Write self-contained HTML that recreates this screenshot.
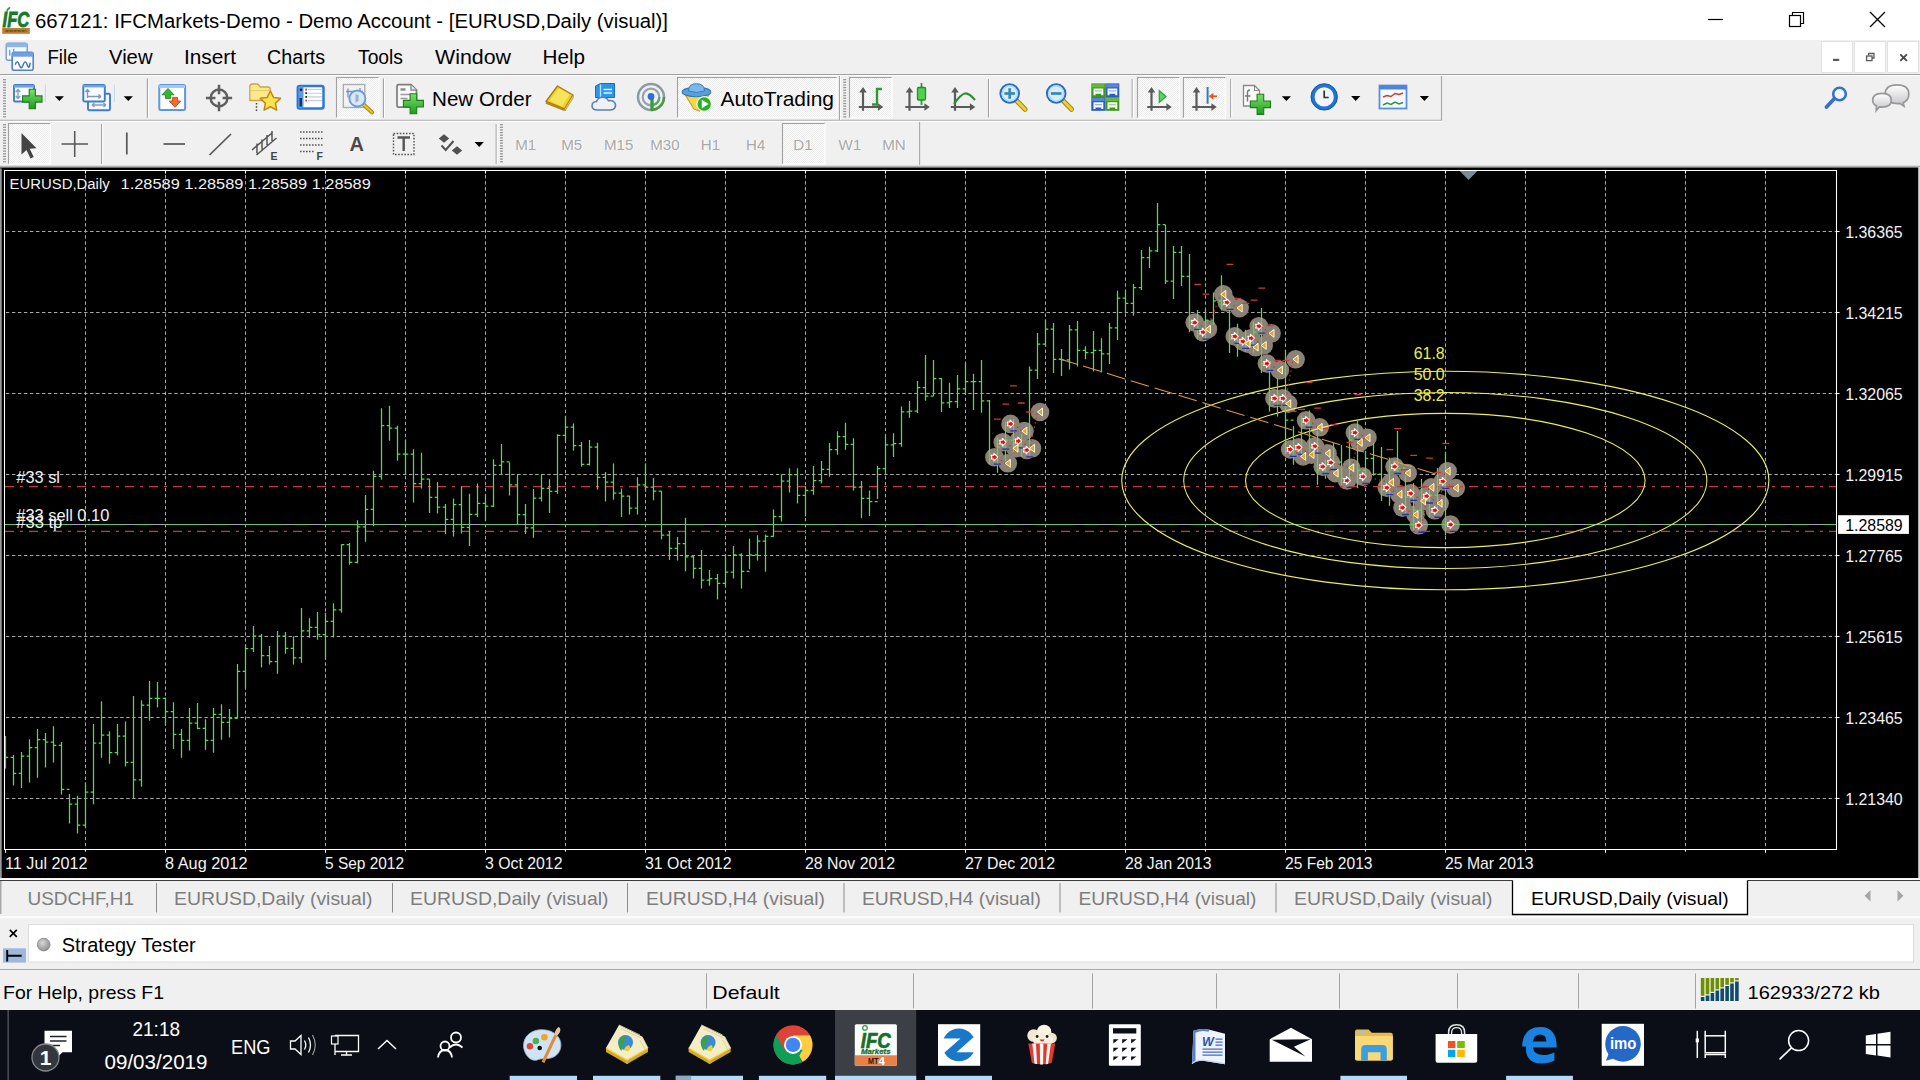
<!DOCTYPE html>
<html><head><meta charset="utf-8"><title>667121: IFCMarkets-Demo - Demo Account - [EURUSD,Daily (visual)]</title>
<style>html,body{margin:0;padding:0;background:#f0f0f0;overflow:hidden;width:1920px;height:1080px}svg{display:block;font-family:"Liberation Sans",sans-serif}text{font-family:"Liberation Sans",sans-serif;white-space:pre}</style></head><body>
<svg width="1920" height="1080" viewBox="0 0 1920 1080">
<defs><pattern id="dith" width="2" height="2" patternUnits="userSpaceOnUse"><rect width="2" height="2" fill="#ffffff"/><rect width="1" height="1" fill="#ececec"/><rect x="1" y="1" width="1" height="1" fill="#ececec"/></pattern><radialGradient id="gball" cx="0.4" cy="0.35" r="0.7"><stop offset="0" stop-color="#d8d8d8"/><stop offset="1" stop-color="#8c8c8c"/></radialGradient><linearGradient id="ggreen" x1="0" y1="0" x2="0" y2="1"><stop offset="0" stop-color="#7be06a"/><stop offset="1" stop-color="#1f9a1f"/></linearGradient><linearGradient id="gblue" x1="0" y1="0" x2="0" y2="1"><stop offset="0" stop-color="#9cc4f0"/><stop offset="1" stop-color="#3b78c8"/></linearGradient><linearGradient id="ggold" x1="0" y1="0" x2="1" y2="1"><stop offset="0" stop-color="#ffe680"/><stop offset="1" stop-color="#d79a1a"/></linearGradient><linearGradient id="gglass" x1="0" y1="0" x2="1" y2="1"><stop offset="0" stop-color="#e8f3ff"/><stop offset="1" stop-color="#8fbcec"/></linearGradient></defs>
<rect x="0" y="0" width="1920" height="1080" fill="#f0f0f0" />
<rect x="0" y="0" width="1920" height="40" fill="#ffffff" />
<g><rect x="2.2" y="6.5" width="27.600" height="22" fill="#fbfdfb"/><rect x="2.2" y="28" width="27.600" height="5.800" fill="#d4722e"/><path d="M5.500 30.900h21" stroke="#3f6a1e" stroke-width="1.700" stroke-dasharray="3.200 .8"/><path d="M6 11.500q1.500-4.500 4.500-4.800l-.8 2.300q-1.600.6-2.300 2.700z" fill="#239a3a"/><text x="2.600" y="27.300" font-size="22.500" font-weight="bold" font-style="italic" fill="#157a2c" stroke="#157a2c" stroke-width=".9" textLength="26.500" lengthAdjust="spacingAndGlyphs">IFC</text></g>
<text x="35" y="28.2" font-size="19.6" fill="#000" textLength="633" lengthAdjust="spacingAndGlyphs" >667121: IFCMarkets-Demo - Demo Account - [EURUSD,Daily (visual)]</text>
<line x1="1708" y1="19.5" x2="1723" y2="19.5" stroke="#000" stroke-width="1.2" />
<path d="M1792.5 15.5v-3h11v11h-3" fill="none" stroke="#000" stroke-width="1.2"/><rect x="1789.5" y="15.5" width="11" height="11" fill="#fff" stroke="#000" stroke-width="1.2"/>
<path d="M1870 12l15 15M1885 12l-15 15" stroke="#000" stroke-width="1.3" fill="none"/>
<g transform="translate(2.7,41.7)"><rect x="3.5" y="1.5" width="21" height="17" rx="2" fill="#f4f8ff" stroke="#6f9bd6" stroke-width="1.4"/><rect x="3.5" y="1.5" width="21" height="4" fill="#8fb6e8"/><rect x="9.5" y="10.5" width="21" height="18" rx="2" fill="#ffffff" stroke="#4f84cc" stroke-width="1.6"/><rect x="9.5" y="10.5" width="21" height="4.5" fill="#6f9fe0"/><path d="M12.5 23q2-6 4 0t4 0t4 0t3-2" fill="none" stroke="#3f74c0" stroke-width="1.5"/><path d="M7 8v6M11 7v4" stroke="#6f9bd6" stroke-width="1.3"/></g>
<text x="47.5" y="64.3" font-size="20" fill="#000" textLength="30.0" lengthAdjust="spacingAndGlyphs" >File</text>
<text x="109" y="64.3" font-size="20" fill="#000" textLength="43.5" lengthAdjust="spacingAndGlyphs" >View</text>
<text x="184" y="64.3" font-size="20" fill="#000" textLength="52" lengthAdjust="spacingAndGlyphs" >Insert</text>
<text x="267" y="64.3" font-size="20" fill="#000" textLength="58" lengthAdjust="spacingAndGlyphs" >Charts</text>
<text x="358" y="64.3" font-size="20" fill="#000" textLength="45" lengthAdjust="spacingAndGlyphs" >Tools</text>
<text x="435" y="64.3" font-size="20" fill="#000" textLength="76" lengthAdjust="spacingAndGlyphs" >Window</text>
<text x="542.5" y="64.3" font-size="20" fill="#000" textLength="42.5" lengthAdjust="spacingAndGlyphs" >Help</text>
<rect x="1821.5" y="41.5" width="31" height="31" fill="#fff" stroke="#e2e2e2" stroke-width="1"/>
<rect x="1854.5" y="41.5" width="31" height="31" fill="#fff" stroke="#e2e2e2" stroke-width="1"/>
<rect x="1887.5" y="41.5" width="31" height="31" fill="#fff" stroke="#e2e2e2" stroke-width="1"/>
<rect x="1833" y="58.8" width="6.2" height="2.2" fill="#5a5a5a" />
<path d="M1868.5 55.5v-2h5.5v4.5h-2" fill="none" stroke="#5a5a5a" stroke-width="1.3"/><rect x="1866.6" y="56" width="5.4" height="4.6" fill="#fff" stroke="#5a5a5a" stroke-width="1.3"/>
<path d="M1900.3 54.3l6.6 6.6M1906.9 54.3l-6.6 6.6" stroke="#4a4a4a" stroke-width="1.9" fill="none"/>
<line x1="0" y1="74.5" x2="1920" y2="74.5" stroke="#a0a0a0" stroke-width="1" />
<line x1="0" y1="75.5" x2="1920" y2="75.5" stroke="#ffffff" stroke-width="1" />
<line x1="0" y1="120.3" x2="1441.5" y2="120.3" stroke="#a6a6a6" stroke-width="1.1"/><line x1="0" y1="121.4" x2="1441.5" y2="121.4" stroke="#ffffff" stroke-width="1"/><line x1="1441.5" y1="76" x2="1441.5" y2="120.5" stroke="#a6a6a6" stroke-width="1.1"/><line x1="839.5" y1="76" x2="839.5" y2="120" stroke="#a6a6a6" stroke-width="1.1"/><line x1="840.6" y1="76" x2="840.6" y2="120" stroke="#fff" stroke-width="1"/><line x1="919.6" y1="122" x2="919.6" y2="165.5" stroke="#a6a6a6" stroke-width="1.1"/><rect x="3" y="79" width="3" height="1.3" fill="#9a9a9a"/><rect x="3" y="81.65" width="3" height="1.3" fill="#9a9a9a"/><rect x="3" y="84.30000000000001" width="3" height="1.3" fill="#9a9a9a"/><rect x="3" y="86.95000000000002" width="3" height="1.3" fill="#9a9a9a"/><rect x="3" y="89.60000000000002" width="3" height="1.3" fill="#9a9a9a"/><rect x="3" y="92.25000000000003" width="3" height="1.3" fill="#9a9a9a"/><rect x="3" y="94.90000000000003" width="3" height="1.3" fill="#9a9a9a"/><rect x="3" y="97.55000000000004" width="3" height="1.3" fill="#9a9a9a"/><rect x="3" y="100.20000000000005" width="3" height="1.3" fill="#9a9a9a"/><rect x="3" y="102.85000000000005" width="3" height="1.3" fill="#9a9a9a"/><rect x="3" y="105.50000000000006" width="3" height="1.3" fill="#9a9a9a"/><rect x="3" y="108.15000000000006" width="3" height="1.3" fill="#9a9a9a"/><rect x="3" y="110.80000000000007" width="3" height="1.3" fill="#9a9a9a"/><rect x="3" y="113.45000000000007" width="3" height="1.3" fill="#9a9a9a"/><rect x="3" y="116.10000000000008" width="3" height="1.3" fill="#9a9a9a"/><rect x="843.2" y="79" width="3" height="1.3" fill="#9a9a9a"/><rect x="843.2" y="81.65" width="3" height="1.3" fill="#9a9a9a"/><rect x="843.2" y="84.30000000000001" width="3" height="1.3" fill="#9a9a9a"/><rect x="843.2" y="86.95000000000002" width="3" height="1.3" fill="#9a9a9a"/><rect x="843.2" y="89.60000000000002" width="3" height="1.3" fill="#9a9a9a"/><rect x="843.2" y="92.25000000000003" width="3" height="1.3" fill="#9a9a9a"/><rect x="843.2" y="94.90000000000003" width="3" height="1.3" fill="#9a9a9a"/><rect x="843.2" y="97.55000000000004" width="3" height="1.3" fill="#9a9a9a"/><rect x="843.2" y="100.20000000000005" width="3" height="1.3" fill="#9a9a9a"/><rect x="843.2" y="102.85000000000005" width="3" height="1.3" fill="#9a9a9a"/><rect x="843.2" y="105.50000000000006" width="3" height="1.3" fill="#9a9a9a"/><rect x="843.2" y="108.15000000000006" width="3" height="1.3" fill="#9a9a9a"/><rect x="843.2" y="110.80000000000007" width="3" height="1.3" fill="#9a9a9a"/><rect x="843.2" y="113.45000000000007" width="3" height="1.3" fill="#9a9a9a"/><rect x="843.2" y="116.10000000000008" width="3" height="1.3" fill="#9a9a9a"/><rect x="3" y="124" width="3" height="1.3" fill="#9a9a9a"/><rect x="3" y="126.65" width="3" height="1.3" fill="#9a9a9a"/><rect x="3" y="129.3" width="3" height="1.3" fill="#9a9a9a"/><rect x="3" y="131.95000000000002" width="3" height="1.3" fill="#9a9a9a"/><rect x="3" y="134.60000000000002" width="3" height="1.3" fill="#9a9a9a"/><rect x="3" y="137.25000000000003" width="3" height="1.3" fill="#9a9a9a"/><rect x="3" y="139.90000000000003" width="3" height="1.3" fill="#9a9a9a"/><rect x="3" y="142.55000000000004" width="3" height="1.3" fill="#9a9a9a"/><rect x="3" y="145.20000000000005" width="3" height="1.3" fill="#9a9a9a"/><rect x="3" y="147.85000000000005" width="3" height="1.3" fill="#9a9a9a"/><rect x="3" y="150.50000000000006" width="3" height="1.3" fill="#9a9a9a"/><rect x="3" y="153.15000000000006" width="3" height="1.3" fill="#9a9a9a"/><rect x="3" y="155.80000000000007" width="3" height="1.3" fill="#9a9a9a"/><rect x="3" y="158.45000000000007" width="3" height="1.3" fill="#9a9a9a"/><rect x="3" y="161.10000000000008" width="3" height="1.3" fill="#9a9a9a"/><rect x="500" y="124" width="3" height="1.3" fill="#9a9a9a"/><rect x="500" y="126.65" width="3" height="1.3" fill="#9a9a9a"/><rect x="500" y="129.3" width="3" height="1.3" fill="#9a9a9a"/><rect x="500" y="131.95000000000002" width="3" height="1.3" fill="#9a9a9a"/><rect x="500" y="134.60000000000002" width="3" height="1.3" fill="#9a9a9a"/><rect x="500" y="137.25000000000003" width="3" height="1.3" fill="#9a9a9a"/><rect x="500" y="139.90000000000003" width="3" height="1.3" fill="#9a9a9a"/><rect x="500" y="142.55000000000004" width="3" height="1.3" fill="#9a9a9a"/><rect x="500" y="145.20000000000005" width="3" height="1.3" fill="#9a9a9a"/><rect x="500" y="147.85000000000005" width="3" height="1.3" fill="#9a9a9a"/><rect x="500" y="150.50000000000006" width="3" height="1.3" fill="#9a9a9a"/><rect x="500" y="153.15000000000006" width="3" height="1.3" fill="#9a9a9a"/><rect x="500" y="155.80000000000007" width="3" height="1.3" fill="#9a9a9a"/><rect x="500" y="158.45000000000007" width="3" height="1.3" fill="#9a9a9a"/><rect x="500" y="161.10000000000008" width="3" height="1.3" fill="#9a9a9a"/><rect x="14" y="85" width="20" height="16.500" rx="1" fill="#f8fbff" stroke="#3f7cc8" stroke-width="1.900"/><rect x="14" y="85" width="20" height="2.600" fill="#6ea2e0"/><path d="M18 89.500v9M15.800 92l2.200-2.600 2.200 2.600M15.800 96l2.200 2.600 2.200-2.600" stroke="#8098b8" stroke-width="1.300" fill="none"/><path d="M45.300 84.500v17.500" stroke="#c4d4ea" stroke-width="1"/><path d="M114.400 84.500v17.500" stroke="#c4d4ea" stroke-width="1"/><path d="M29.199999999999996 89.3h6.2v6.6h6.6v6.2h-6.6v6.6h-6.2v-6.6h-6.6v-6.2h6.6z" fill="url(#ggreen)" stroke="#1c7d1c" stroke-width="1.1"/><path d="M54.8 96.2h9.2l-4.6 4.8z" fill="#000"/><rect x="88" y="93.700" width="22" height="16.500" rx="1.200" fill="#f4f8fe" stroke="#3f7cc8" stroke-width="1.900"/><path d="M92 105h14M92 105l2.500-2M92 105l2.500 2M106 105l-2.500-2M106 105l-2.500 2" stroke="#7f9cc4" stroke-width="1.400" fill="none"/><rect x="83.300" y="85" width="21.500" height="16.500" rx="1.200" fill="#f8fbff" stroke="#3f7cc8" stroke-width="1.900"/><rect x="83.300" y="85" width="21.500" height="2.400" fill="#6ea2e0"/><path d="M87.500 89.500v8.500M85.500 92l2-2.500 2 2.500M87.500 96.500h13.500M101 96.500l-2.500-2M101 96.500l-2.500 2" stroke="#8098b8" stroke-width="1.400" fill="none"/><path d="M123.70000000000002 96.2h9.2l-4.6 4.8z" fill="#000"/><line x1="147.4" y1="78.5" x2="147.4" y2="117.7" stroke="#a0a0a0" stroke-width="1.1"/><line x1="148.5" y1="78.5" x2="148.5" y2="117.7" stroke="#ffffff" stroke-width="1"/><rect x="159.300" y="85" width="25.800" height="25" rx="1.500" fill="#ffffff" stroke="#5a98e0" stroke-width="2"/><rect x="159.300" y="85" width="25.800" height="3" fill="#a4c8f2"/><path d="M168 88.500l6 6.300h-3.400v3.600h-5.200v-3.600h-3.400z" fill="#35b535" stroke="#1f8a1f" stroke-width=".9"/><path d="M175 107.300l-5.700-6.300h3.200v-3.600h5v3.600h3.200z" fill="#f26a30" stroke="#c8441a" stroke-width=".9"/><circle cx="219" cy="98" r="8.400" fill="none" stroke="#5f5f5f" stroke-width="2.500"/><path d="M219 84.800v9.500M219 101.700v9.500M205.900 98h9.500M222.600 98h9.500" stroke="#5f5f5f" stroke-width="2.500"/><path d="M249.800 87q0-3 2.500-3h5.500l2.500 3h7.500q2.500 0 2.500 2.500v11h-20.500z" fill="#fbe98c" stroke="#c9a548" stroke-width="1.300"/><path d="M250 90.500h20" stroke="#e8cf6a" stroke-width="1.200"/><path d="M256.500 103v8.500" stroke="#444" stroke-width="1.500" stroke-dasharray="1.500 1.800"/><path d="M270.400 91l3.100 6.400 7 .95-5.100 4.850 1.300 6.950-6.300-3.400-6.300 3.400 1.300-6.950-5.100-4.850 7-.95z" fill="#ffe14c" stroke="#b88c14" stroke-width="1.500" stroke-linejoin="round"/><rect x="297.800" y="86" width="25.700" height="22.500" rx="2" fill="#ffffff" stroke="#2a78d8" stroke-width="2.500"/><rect x="298.500" y="86.500" width="5" height="21.500" fill="#5a9ae6"/><rect x="299.500" y="98" width="2.500" height="8.500" fill="#24344a"/><circle cx="301" cy="89.700" r="1.300" fill="#111"/><path d="M308 89.500h14M308 93.200h14M308 96.900h14M308 100.600h14" stroke="#c4cede" stroke-width="1.100"/><path d="M305.300 89.500h1.800M305.300 100.600h1.800" stroke="#e03a3a" stroke-width="1.800"/><path d="M305.300 93.200h1.800M305.300 96.900h1.800" stroke="#222" stroke-width="1.800"/><rect x="336.5" y="77.5" width="42.5" height="40.2" fill="url(#dith)"/><path d="M336.5 117.7V77.5H379.0" fill="none" stroke="#a0a0a0" stroke-width="1.1"/><path d="M336.5 117.7H379.0V77.5" fill="none" stroke="#ffffff" stroke-width="1.1"/><rect x="343.300" y="84.500" width="21.500" height="23" fill="#f2f2f2" stroke="#a8a8a8" stroke-width="1.300"/><path d="M348 88.500v9M346 91.500h17M360 88v5" stroke="#6f94c4" stroke-width="1.300" fill="none"/><path d="M363.500 104.500l8.500 7.800" stroke="#a8860e" stroke-width="4.200" stroke-linecap="round"/><path d="M363.500 104.500l8.500 7.800" stroke="#e4c42c" stroke-width="2.200" stroke-linecap="round"/><circle cx="357.400" cy="98.500" r="8" fill="#d4e8fa" fill-opacity=".9" stroke="#6a9ed8" stroke-width="1.900"/><path d="M355.500 94v8.500l3-1.500v-6z" fill="#9ab0c8"/><line x1="383.4" y1="78.5" x2="383.4" y2="117.7" stroke="#a0a0a0" stroke-width="1.1"/><line x1="384.5" y1="78.5" x2="384.5" y2="117.7" stroke="#ffffff" stroke-width="1"/><path d="M398.500 84.700h12.500l5.500 5.500v17h-18q-1.500 0-1.500-1.500v-19.500q0-1.500 1.500-1.500z" fill="#f8f8f8" stroke="#7c7c7c" stroke-width="1.700"/><path d="M411 84.700v5.500h5.500" fill="#e4e4e4" stroke="#7c7c7c" stroke-width="1.200"/><path d="M400.500 89.500h5" stroke="#8a8a8a" stroke-width="2.400"/><path d="M400.500 94.500h9.500M400.500 98.500h7" stroke="#9a9a9a" stroke-width="1.500"/><path d="M410.09999999999997 93.7h6.6v6.7h6.7v6.6h-6.7v6.7h-6.6v-6.7h-6.7v-6.6h6.7z" fill="url(#ggreen)" stroke="#1c7d1c" stroke-width="1.1"/><text x="432" y="105.600" font-size="20.300" fill="#000" textLength="99.600" lengthAdjust="spacingAndGlyphs">New Order</text><path d="M546 101.500l11.500-15.500 15.500 9-8.500 14z" fill="#f0d022" stroke="#a87a18" stroke-width="1.400" stroke-linejoin="round"/><path d="M549.500 100.500l9.500-12 10.500 6-7.500 12z" fill="#f8e45a"/><path d="M546 101.500l18.500 7.500-.3 2-18.500-7.300z" fill="#b88418"/><path d="M564.500 109l8.500-14 .3 2.500-8.300 13.500z" fill="#e8d490" stroke="#a87a18" stroke-width=".7"/><path d="M595.500 86l5-2.500h14v14h-19z" fill="#2a96ec" stroke="#1a6cc0" stroke-width="1"/><path d="M600.500 84.500v13.500" stroke="#bfe0fa" stroke-width="1.300"/><path d="M603.500 89.500h8.500M603.500 93h8.500" stroke="#e8f4ff" stroke-width="1.600"/><path d="M597.500 110q-5.500 0-5.500-4.300 0-3.800 4.600-4.200 1.200-4.300 5.900-4.300 4.400 0 5.900 3.600 4.100-.9 6.100 1.600 2.100 2.700 .2 5.600-1.300 2-4.200 2z" fill="#eef2f8" stroke="#5c7cb4" stroke-width="1.500"/><circle cx="651" cy="97" r="13" fill="none" stroke="#8c9aa2" stroke-width="2.500"/><circle cx="651" cy="97" r="8.300" fill="none" stroke="#98a4ac" stroke-width="2.200"/><path d="M651 110A13 13 0 0 0 664 97" fill="none" stroke="#4a9a4a" stroke-width="2.500"/><path d="M654 104.800A8.300 8.300 0 0 0 659.300 97" fill="none" stroke="#5aa85a" stroke-width="2.200"/><path d="M652 97v13.500" stroke="#3a9c3a" stroke-width="3.400"/><circle cx="651" cy="96.500" r="3.400" fill="#2f6fd8"/><rect x="677.5" y="77.5" width="159.5" height="40.2" fill="url(#dith)"/><path d="M677.5 117.7V77.5H837.0" fill="none" stroke="#a0a0a0" stroke-width="1.1"/><path d="M677.5 117.7H837.0V77.5" fill="none" stroke="#ffffff" stroke-width="1.1"/><path d="M685 94.500h24l-9.500 16.500-5.500-2z" fill="#f4d84a" stroke="#c8a020" stroke-width="1.100"/><ellipse cx="696.500" cy="92" rx="14.300" ry="4.800" fill="#58a0dc" stroke="#3a78b8" stroke-width="1.100"/><path d="M688.500 91q0-7.300 8-7.300t8 7.300q-8 3-16 0z" fill="#7ab8ec" stroke="#3a78b8" stroke-width="1"/><circle cx="704.200" cy="104" r="7.300" fill="#28b028" stroke="#e8f8e8" stroke-width="1.300"/><path d="M701.800 99.800v8.400l6.800-4.200z" fill="#ffffff"/><text x="720.600" y="105.600" font-size="20.300" fill="#000" textLength="113.400" lengthAdjust="spacingAndGlyphs">AutoTrading</text><rect x="849.5" y="77.5" width="42.5" height="40.5" fill="url(#dith)"/><path d="M849.5 118.0V77.5H892.0" fill="none" stroke="#a0a0a0" stroke-width="1.1"/><path d="M849.5 118.0H892.0V77.5" fill="none" stroke="#ffffff" stroke-width="1.1"/><g stroke="#5a5a5a" stroke-width="2.200" fill="none"><path d="M863 91V110.8M858.8 107H879.5"/></g><path d="M863 87l3.800 5.400h-7.600zM883.3 107l-5.400 3.800v-7.600z" fill="#5a5a5a"/><path d="M872 104.500h5v-15.500h5" fill="none" stroke="#2f9a2f" stroke-width="2.400"/><g stroke="#5a5a5a" stroke-width="2.200" fill="none"><path d="M909.5 91V110.8M905.3 107H926.0"/></g><path d="M909.5 87l3.800 5.400h-7.600zM929.8 107l-5.400 3.800v-7.600z" fill="#5a5a5a"/><path d="M921.500 83v22" stroke="#2f9a2f" stroke-width="1.800"/><rect x="917.500" y="87.500" width="8" height="12.500" rx="1" fill="#4fd04f" stroke="#239023" stroke-width="1.300"/><g stroke="#5a5a5a" stroke-width="2.200" fill="none"><path d="M955 91V110.8M950.8 107H971.5"/></g><path d="M955 87l3.800 5.400h-7.600zM975.3 107l-5.400 3.800v-7.600z" fill="#5a5a5a"/><path d="M954 104q7-10 11-10.500t10 6.500" fill="none" stroke="#2f8f2f" stroke-width="2.200"/><line x1="988.5" y1="79" x2="988.5" y2="117.5" stroke="#a0a0a0" stroke-width="1.1"/><line x1="989.6" y1="79" x2="989.6" y2="117.5" stroke="#ffffff" stroke-width="1"/><path d="M1015.5 99.5l9.500 9.800" stroke="#a8860e" stroke-width="5" stroke-linecap="round"/><path d="M1015.5 99.5l9.500 9.800" stroke="#ecd02c" stroke-width="3" stroke-linecap="round"/><circle cx="1009.7" cy="93.5" r="9.300" fill="#d2eeff" stroke="#2f6cbc" stroke-width="2"/><circle cx="1009.7" cy="93.5" r="7.600" fill="none" stroke="#a8d8fa" stroke-width="1.200"/><path d="M1004.4000000000001 93.5h10.600" stroke="#3a86b4" stroke-width="2.700"/><path d="M1009.7 88.2v10.600" stroke="#3a86b4" stroke-width="2.700"/><path d="M1062.0 99.5l9.500 9.800" stroke="#a8860e" stroke-width="5" stroke-linecap="round"/><path d="M1062.0 99.5l9.500 9.800" stroke="#ecd02c" stroke-width="3" stroke-linecap="round"/><circle cx="1056.2" cy="93.5" r="9.300" fill="#d2eeff" stroke="#2f6cbc" stroke-width="2"/><circle cx="1056.2" cy="93.5" r="7.600" fill="none" stroke="#a8d8fa" stroke-width="1.200"/><path d="M1050.9 93.5h10.600" stroke="#3a86b4" stroke-width="2.700"/><rect x="1091.3" y="83.4" width="14" height="13.700" fill="#3c9a18"/><rect x="1092.1" y="84.2" width="12.400" height="3.200" fill="#8fd060" fill-opacity=".55"/><path d="M1093.5 88.60000000000001h9.800v6.600h-2v-1.500h-5.800v1.500h-2z" fill="#f4faff"/><path d="M1094.8999999999999 91.0h7" stroke="#8fd060" stroke-width="1.100"/><rect x="1105.3" y="83.4" width="14" height="13.700" fill="#2a5cc4"/><rect x="1106.1" y="84.2" width="12.400" height="3.200" fill="#7fa8f0" fill-opacity=".55"/><path d="M1107.5 88.60000000000001h9.800v6.600h-2v-1.500h-5.800v1.500h-2z" fill="#f4faff"/><path d="M1108.8999999999999 91.0h7" stroke="#7fa8f0" stroke-width="1.100"/><rect x="1091.3" y="97.1" width="14" height="13.700" fill="#2a5cc4"/><rect x="1092.1" y="97.89999999999999" width="12.400" height="3.200" fill="#7fa8f0" fill-opacity=".55"/><path d="M1093.5 102.3h9.800v6.600h-2v-1.500h-5.800v1.500h-2z" fill="#f4faff"/><path d="M1094.8999999999999 104.69999999999999h7" stroke="#7fa8f0" stroke-width="1.100"/><rect x="1105.3" y="97.1" width="14" height="13.700" fill="#3c9a18"/><rect x="1106.1" y="97.89999999999999" width="12.400" height="3.200" fill="#8fd060" fill-opacity=".55"/><path d="M1107.5 102.3h9.800v6.600h-2v-1.500h-5.800v1.500h-2z" fill="#f4faff"/><path d="M1108.8999999999999 104.69999999999999h7" stroke="#8fd060" stroke-width="1.100"/><line x1="1132.2" y1="79" x2="1132.2" y2="117.5" stroke="#a0a0a0" stroke-width="1.1"/><line x1="1133.3" y1="79" x2="1133.3" y2="117.5" stroke="#ffffff" stroke-width="1"/><rect x="1137.5" y="77.5" width="42" height="40.5" fill="url(#dith)"/><path d="M1137.5 118.0V77.5H1179.5" fill="none" stroke="#a0a0a0" stroke-width="1.1"/><path d="M1137.5 118.0H1179.5V77.5" fill="none" stroke="#ffffff" stroke-width="1.1"/><g stroke="#5a5a5a" stroke-width="2.200" fill="none"><path d="M1151.5 91V110.8M1147.3 107H1168.0"/></g><path d="M1151.5 87l3.800 5.400h-7.600zM1171.8 107l-5.400 3.800v-7.600z" fill="#5a5a5a"/><path d="M1159.300 90.800v11.600l6.600-5.800z" fill="#58d468" stroke="#2fa63f" stroke-width="1.300"/><rect x="1183.5" y="77.5" width="42" height="40.5" fill="url(#dith)"/><path d="M1183.5 118.0V77.5H1225.5" fill="none" stroke="#a0a0a0" stroke-width="1.1"/><path d="M1183.5 118.0H1225.5V77.5" fill="none" stroke="#ffffff" stroke-width="1.1"/><g stroke="#5a5a5a" stroke-width="2.200" fill="none"><path d="M1196.5 91V110.8M1192.3 107H1213.0"/></g><path d="M1196.5 87l3.800 5.400h-7.600zM1216.8 107l-5.400 3.800v-7.600z" fill="#5a5a5a"/><path d="M1207.600 87v16.800" stroke="#2a7fb4" stroke-width="2"/><path d="M1209.500 96.300h7.500" stroke="#e05a20" stroke-width="1.800"/><path d="M1209 96.300l4.500-3.600v7.200z" fill="#e05a20"/><line x1="1230.7" y1="79" x2="1230.7" y2="117.5" stroke="#a0a0a0" stroke-width="1.1"/><line x1="1231.8" y1="79" x2="1231.8" y2="117.5" stroke="#ffffff" stroke-width="1"/><path d="M1243.500 85.500h11l5 5v15.500h-16z" fill="#fafafa" stroke="#8a8a8a" stroke-width="1.300"/><path d="M1254.500 85.500v5h5" fill="none" stroke="#8a8a8a" stroke-width="1.100"/><path d="M1250 90q-2.500 0-2.500 2.500v9M1245 96h5.500" stroke="#777" stroke-width="1.400" fill="none"/><path d="M1257.1000000000001 94.2h6.6v6.8h6.8v6.6h-6.8v6.8h-6.6v-6.8h-6.8v-6.6h6.8z" fill="url(#ggreen)" stroke="#1c7d1c" stroke-width="1.1"/><path d="M1281.8000000000002 96.3h9.2l-4.6 4.8z" fill="#000"/><circle cx="1324.200" cy="96.900" r="13.200" fill="#1f74d4" stroke="#1656a8" stroke-width="1"/><circle cx="1324.200" cy="96.900" r="9.600" fill="#f2f4f8"/><path d="M1324.200 90.500v7h4.500" stroke="#333" stroke-width="1.700" fill="none"/><path d="M1351.1000000000001 96.1h9.2l-4.6 4.8z" fill="#000"/><rect x="1379.500" y="85.500" width="27" height="23" fill="#f4f8ff" stroke="#5b8fd8" stroke-width="1.800"/><rect x="1379.500" y="85.500" width="27" height="4" fill="#4f84d4"/><path d="M1383 97l4-1.500 4 1 4-3 4 1 4-1.500" stroke="#d04028" stroke-width="1.500" fill="none"/><path d="M1383 105l4-2 4 1.500 4-2.500 4 2 4-1.500" stroke="#2f9a2f" stroke-width="1.500" fill="none"/><path d="M1419.8000000000002 96.1h9.2l-4.6 4.8z" fill="#000"/><path d="M1834 99l-7.500 8" stroke="#3a6fc8" stroke-width="3.800" stroke-linecap="round"/><circle cx="1839.500" cy="94" r="6.300" fill="#f4f8ff" stroke="#3a6fc8" stroke-width="2.600"/><linearGradient id="gbub" x1="0" y1="0" x2="0" y2="1"><stop offset="0" stop-color="#ffffff"/><stop offset="1" stop-color="#c4c4c8"/></linearGradient><path d="M1897 84.800q11.800 0 11.800 9.300 0 6.500-5.600 8.600l.8 3.400-4.400-2.700q-2 .2-3.600 .1-10.800-.6-10.800-9.400 0-9.300 11.800-9.300z" fill="url(#gbub)" stroke="#989898" stroke-width="1.700"/><path d="M1882 93.300q9.300 0 9.300 7 0 6.800-9.300 6.800-1.300 0-2.600-.2l-3.200 3.600.3-4.400q-3.800-1.900-3.800-5.800 0-7 9.300-7z" fill="url(#gbub)" stroke="#989898" stroke-width="1.700"/><rect x="8.5" y="123.5" width="42" height="40.5" fill="url(#dith)"/><path d="M8.5 164.0V123.5H50.5" fill="none" stroke="#a0a0a0" stroke-width="1.1"/><path d="M8.5 164.0H50.5V123.5" fill="none" stroke="#ffffff" stroke-width="1.1"/><path d="M21.500 133v21.500l5-4.500 4 8.500 3.200-1.500-4-8.300 6.800-.5z" fill="#444"/><path d="M74.700 131v26M61.500 144h26.500" stroke="#555" stroke-width="1.500"/><line x1="101.6" y1="124" x2="101.6" y2="164" stroke="#a0a0a0" stroke-width="1.1"/><line x1="102.69999999999999" y1="124" x2="102.69999999999999" y2="164" stroke="#ffffff" stroke-width="1"/><path d="M126.800 132.500v22" stroke="#555" stroke-width="1.700"/><path d="M163.500 144h21.500" stroke="#555" stroke-width="1.700"/><path d="M209.500 155l21.500-21" stroke="#555" stroke-width="1.700"/><path d="M252 150l20-17M256.500 155l20-17M257 143.500v10M262 139.500v10M267 135v10M272 131v10" stroke="#555" stroke-width="1.500"/><text x="270.500" y="160" font-size="10.500" font-weight="bold" fill="#444">E</text><path d="M300 132h22.500M300 138.500h22.500M300 145h22.500M300 151.500h14" stroke="#555" stroke-width="1.400" stroke-dasharray="1.600 1.400"/><text x="316.500" y="160" font-size="10.500" font-weight="bold" fill="#444">F</text><text x="356.800" y="151.300" font-size="20" font-weight="bold" fill="#4a4a4a" text-anchor="middle">A</text><rect x="393.500" y="133.500" width="20.500" height="21" fill="none" stroke="#555" stroke-width="1.400" stroke-dasharray="1.600 1.500"/><path d="M397.500 137.500h12.500M403.700 137.500v13.500" stroke="#555" stroke-width="2.400"/><path d="M438.800 138.500l5.200-4.300 5.200 4.300-5.200 4.300zM451.800 150.500l5.200-4.300 5.200 4.300-5.200 4.300z" fill="#505050"/><path d="M441.500 145.500l4.200 4.500 7.800-9" stroke="#505050" stroke-width="2" fill="none"/><path d="M474.59999999999997 142.10000000000002h9.2l-4.6 4.8z" fill="#000"/><line x1="496.2" y1="124" x2="496.2" y2="164" stroke="#a0a0a0" stroke-width="1.1"/><line x1="497.3" y1="124" x2="497.3" y2="164" stroke="#ffffff" stroke-width="1"/><text x="526.7" y="150.4" font-size="15.200" fill="#ffffff" text-anchor="middle">M1</text><text x="525.7" y="149.5" font-size="15.200" fill="#a9a9a9" text-anchor="middle">M1</text><text x="572.7" y="150.4" font-size="15.200" fill="#ffffff" text-anchor="middle">M5</text><text x="571.7" y="149.5" font-size="15.200" fill="#a9a9a9" text-anchor="middle">M5</text><text x="619.7" y="150.4" font-size="15.200" fill="#ffffff" text-anchor="middle">M15</text><text x="618.7" y="149.5" font-size="15.200" fill="#a9a9a9" text-anchor="middle">M15</text><text x="666" y="150.4" font-size="15.200" fill="#ffffff" text-anchor="middle">M30</text><text x="665" y="149.5" font-size="15.200" fill="#a9a9a9" text-anchor="middle">M30</text><text x="711.5" y="150.4" font-size="15.200" fill="#ffffff" text-anchor="middle">H1</text><text x="710.5" y="149.5" font-size="15.200" fill="#a9a9a9" text-anchor="middle">H1</text><text x="756.7" y="150.4" font-size="15.200" fill="#ffffff" text-anchor="middle">H4</text><text x="755.7" y="149.5" font-size="15.200" fill="#a9a9a9" text-anchor="middle">H4</text><rect x="782.5" y="123.5" width="42.5" height="40.5" fill="url(#dith)"/><path d="M782.5 164.0V123.5H825.0" fill="none" stroke="#a0a0a0" stroke-width="1.1"/><path d="M782.5 164.0H825.0V123.5" fill="none" stroke="#ffffff" stroke-width="1.1"/><text x="804" y="150.4" font-size="15.200" fill="#ffffff" text-anchor="middle">D1</text><text x="803" y="149.5" font-size="15.200" fill="#a9a9a9" text-anchor="middle">D1</text><text x="851" y="150.4" font-size="15.200" fill="#ffffff" text-anchor="middle">W1</text><text x="850" y="149.5" font-size="15.200" fill="#a9a9a9" text-anchor="middle">W1</text><text x="895" y="150.4" font-size="15.200" fill="#ffffff" text-anchor="middle">MN</text><text x="894" y="149.5" font-size="15.200" fill="#a9a9a9" text-anchor="middle">MN</text>
<linearGradient id="gtop" x1="0" y1="0" x2="0" y2="1"><stop offset="0" stop-color="#f6f6f6"/><stop offset="0.45" stop-color="#b0b0b0"/><stop offset="1" stop-color="#303030"/></linearGradient>
<rect x="0" y="165" width="1920" height="3.4" fill="url(#gtop)" />
<rect x="0" y="168" width="1920" height="710.2" fill="#000" />
<rect x="0" y="168.5" width="1.7" height="712" fill="#9a9a9a" />
<rect x="1918.2" y="167" width="1.8" height="711.5" fill="#d8d8d8" />
<line x1="85.5" y1="175.1" x2="85.5" y2="849.5" stroke="#aaaaaa" stroke-width="1.0" stroke-dasharray="3.4 2.6155"/>
<line x1="165.5" y1="175.1" x2="165.5" y2="849.5" stroke="#aaaaaa" stroke-width="1.0" stroke-dasharray="3.4 2.6155"/>
<line x1="245.5" y1="175.1" x2="245.5" y2="849.5" stroke="#aaaaaa" stroke-width="1.0" stroke-dasharray="3.4 2.6155"/>
<line x1="325.5" y1="175.1" x2="325.5" y2="849.5" stroke="#aaaaaa" stroke-width="1.0" stroke-dasharray="3.4 2.6155"/>
<line x1="405.5" y1="175.1" x2="405.5" y2="849.5" stroke="#aaaaaa" stroke-width="1.0" stroke-dasharray="3.4 2.6155"/>
<line x1="485.5" y1="175.1" x2="485.5" y2="849.5" stroke="#aaaaaa" stroke-width="1.0" stroke-dasharray="3.4 2.6155"/>
<line x1="565.5" y1="175.1" x2="565.5" y2="849.5" stroke="#aaaaaa" stroke-width="1.0" stroke-dasharray="3.4 2.6155"/>
<line x1="645.5" y1="175.1" x2="645.5" y2="849.5" stroke="#aaaaaa" stroke-width="1.0" stroke-dasharray="3.4 2.6155"/>
<line x1="725.5" y1="175.1" x2="725.5" y2="849.5" stroke="#aaaaaa" stroke-width="1.0" stroke-dasharray="3.4 2.6155"/>
<line x1="805.5" y1="175.1" x2="805.5" y2="849.5" stroke="#aaaaaa" stroke-width="1.0" stroke-dasharray="3.4 2.6155"/>
<line x1="885.5" y1="175.1" x2="885.5" y2="849.5" stroke="#aaaaaa" stroke-width="1.0" stroke-dasharray="3.4 2.6155"/>
<line x1="965.5" y1="175.1" x2="965.5" y2="849.5" stroke="#aaaaaa" stroke-width="1.0" stroke-dasharray="3.4 2.6155"/>
<line x1="1045.5" y1="175.1" x2="1045.5" y2="849.5" stroke="#aaaaaa" stroke-width="1.0" stroke-dasharray="3.4 2.6155"/>
<line x1="1125.5" y1="175.1" x2="1125.5" y2="849.5" stroke="#aaaaaa" stroke-width="1.0" stroke-dasharray="3.4 2.6155"/>
<line x1="1205.5" y1="175.1" x2="1205.5" y2="849.5" stroke="#aaaaaa" stroke-width="1.0" stroke-dasharray="3.4 2.6155"/>
<line x1="1285.5" y1="175.1" x2="1285.5" y2="849.5" stroke="#aaaaaa" stroke-width="1.0" stroke-dasharray="3.4 2.6155"/>
<line x1="1365.5" y1="175.1" x2="1365.5" y2="849.5" stroke="#aaaaaa" stroke-width="1.0" stroke-dasharray="3.4 2.6155"/>
<line x1="1445.5" y1="175.1" x2="1445.5" y2="849.5" stroke="#aaaaaa" stroke-width="1.0" stroke-dasharray="3.4 2.6155"/>
<line x1="1525.5" y1="175.1" x2="1525.5" y2="849.5" stroke="#aaaaaa" stroke-width="1.0" stroke-dasharray="3.4 2.6155"/>
<line x1="1605.5" y1="175.1" x2="1605.5" y2="849.5" stroke="#aaaaaa" stroke-width="1.0" stroke-dasharray="3.4 2.6155"/>
<line x1="1685.5" y1="175.1" x2="1685.5" y2="849.5" stroke="#aaaaaa" stroke-width="1.0" stroke-dasharray="3.4 2.6155"/>
<line x1="1765.5" y1="175.1" x2="1765.5" y2="849.5" stroke="#aaaaaa" stroke-width="1.0" stroke-dasharray="3.4 2.6155"/>
<line x1="5.9" y1="231.5" x2="1836.5" y2="231.5" stroke="#aaaaaa" stroke-width="1.0" stroke-dasharray="3.4 2.6155"/>
<line x1="5.9" y1="312.5" x2="1836.5" y2="312.5" stroke="#aaaaaa" stroke-width="1.0" stroke-dasharray="3.4 2.6155"/>
<line x1="5.9" y1="393.5" x2="1836.5" y2="393.5" stroke="#aaaaaa" stroke-width="1.0" stroke-dasharray="3.4 2.6155"/>
<line x1="5.9" y1="474.5" x2="1836.5" y2="474.5" stroke="#aaaaaa" stroke-width="1.0" stroke-dasharray="3.4 2.6155"/>
<line x1="5.9" y1="555.5" x2="1836.5" y2="555.5" stroke="#aaaaaa" stroke-width="1.0" stroke-dasharray="3.4 2.6155"/>
<line x1="5.9" y1="636.5" x2="1836.5" y2="636.5" stroke="#aaaaaa" stroke-width="1.0" stroke-dasharray="3.4 2.6155"/>
<line x1="5.9" y1="717.5" x2="1836.5" y2="717.5" stroke="#aaaaaa" stroke-width="1.0" stroke-dasharray="3.4 2.6155"/>
<line x1="5.9" y1="798.5" x2="1836.5" y2="798.5" stroke="#aaaaaa" stroke-width="1.0" stroke-dasharray="3.4 2.6155"/>
<g fill="#8c8175"><circle cx="994.4" cy="457.2" r="9.3"/><circle cx="1007.8" cy="463.3" r="9.3"/><circle cx="1002.8" cy="442.2" r="9.3"/><circle cx="1015.5" cy="448.3" r="9.3"/><circle cx="1010.5" cy="423.9" r="9.3"/><circle cx="1024.4" cy="431" r="9.3"/><circle cx="1018.3" cy="441" r="9.3"/><circle cx="1032" cy="448.3" r="9.3"/><circle cx="1026.7" cy="450" r="9.3"/><circle cx="1040" cy="412" r="9.3"/><circle cx="1194.7" cy="322.5" r="9.3"/><circle cx="1207.9" cy="329.2" r="9.3"/><circle cx="1202.9" cy="332.2" r="9.3"/><circle cx="1223.3" cy="294.3" r="9.3"/><circle cx="1226.9" cy="302.4" r="9.3"/><circle cx="1239.6" cy="308.1" r="9.3"/><circle cx="1234.8" cy="336.4" r="9.3"/><circle cx="1247.6" cy="343.6" r="9.3"/><circle cx="1242.8" cy="341.4" r="9.3"/><circle cx="1255.6" cy="347.2" r="9.3"/><circle cx="1251" cy="338.2" r="9.3"/><circle cx="1263.7" cy="345.4" r="9.3"/><circle cx="1258.8" cy="326.2" r="9.3"/><circle cx="1271.5" cy="333.4" r="9.3"/><circle cx="1266.9" cy="363.5" r="9.3"/><circle cx="1279.9" cy="370.1" r="9.3"/><circle cx="1274.5" cy="398.4" r="9.3"/><circle cx="1288.2" cy="403.6" r="9.3"/><circle cx="1282.9" cy="398.4" r="9.3"/><circle cx="1295.6" cy="359.3" r="9.3"/><circle cx="1290.2" cy="449.4" r="9.3"/><circle cx="1303.1" cy="456.4" r="9.3"/><circle cx="1298.6" cy="447.4" r="9.3"/><circle cx="1311.5" cy="454.6" r="9.3"/><circle cx="1306.1" cy="420.3" r="9.3"/><circle cx="1319.6" cy="427.3" r="9.3"/><circle cx="1314.8" cy="446.2" r="9.3"/><circle cx="1327.5" cy="453.4" r="9.3"/><circle cx="1322.7" cy="466.6" r="9.3"/><circle cx="1335.6" cy="473.2" r="9.3"/><circle cx="1330.8" cy="462.6" r="9.3"/><circle cx="1351.2" cy="467.8" r="9.3"/><circle cx="1347" cy="480.5" r="9.3"/><circle cx="1359.7" cy="442.5" r="9.3"/><circle cx="1354.9" cy="432.6" r="9.3"/><circle cx="1367.5" cy="437.7" r="9.3"/><circle cx="1362.9" cy="476.6" r="9.3"/><circle cx="1391" cy="482.3" r="9.3"/><circle cx="1386.8" cy="487.7" r="9.3"/><circle cx="1399.4" cy="494.3" r="9.3"/><circle cx="1394.6" cy="466.6" r="9.3"/><circle cx="1407.6" cy="473" r="9.3"/><circle cx="1402.5" cy="507.6" r="9.3"/><circle cx="1415.5" cy="514.5" r="9.3"/><circle cx="1410.7" cy="493.4" r="9.3"/><circle cx="1423" cy="500.9" r="9.3"/><circle cx="1418.7" cy="525.3" r="9.3"/><circle cx="1431.4" cy="487.4" r="9.3"/><circle cx="1426.6" cy="496.1" r="9.3"/><circle cx="1439.6" cy="503.3" r="9.3"/><circle cx="1434.8" cy="510.3" r="9.3"/><circle cx="1447.6" cy="471.2" r="9.3"/><circle cx="1442.8" cy="481.4" r="9.3"/><circle cx="1455.7" cy="488" r="9.3"/><circle cx="1450.6" cy="524.5" r="9.3"/></g>
<line x1="5" y1="486.7" x2="1836" y2="486.7" stroke="#c63a3a" stroke-width="1.2" stroke-dasharray="9 6 3 6"/>
<line x1="5" y1="531.3" x2="1836" y2="531.3" stroke="#c63a3a" stroke-width="1.2" stroke-dasharray="9 6 3 6"/>
<line x1="5" y1="524.5" x2="1836" y2="524.5" stroke="#a2a2ba" stroke-width="1.1" />
<line x1="5" y1="524.5" x2="1836" y2="524.5" stroke="#62c462" stroke-width="1.1" stroke-dasharray="42 7 18 12" stroke-opacity="0.85"/>
<ellipse cx="1445.3" cy="480.5" rx="199.8" ry="67.1" fill="none" stroke="#ecec62" stroke-width="1.1"/>
<ellipse cx="1445.3" cy="480.5" rx="261.6" ry="88.05" fill="none" stroke="#ecec62" stroke-width="1.1"/>
<ellipse cx="1445.3" cy="480.5" rx="323.6" ry="109.3" fill="none" stroke="#ecec62" stroke-width="1.1"/>
<line x1="1059" y1="358.7" x2="1440" y2="475.3" stroke="#dc9a50" stroke-width="1.05" stroke-dasharray="19 6"/>
<path d="M5.5 736.1V768.6M5.5 757.3h2.8M13.5 755.1V785.5M13.5 773.4h2.8M13.5 757.3h-2.8M21.5 752.0V787.9M21.5 756.1h2.8M21.5 773.4h-2.8M29.5 739.2V782.6M29.5 747.7h2.8M29.5 756.1h-2.8M37.5 729.1V777.7M37.5 739.7h2.8M37.5 747.7h-2.8M45.5 733.0V767.6M45.5 742.1h2.8M45.5 739.7h-2.8M53.5 726.2V762.6M53.5 745.3h2.8M53.5 742.1h-2.8M61.5 742.1V794.6M61.5 789.3h2.8M61.5 745.3h-2.8M69.5 794.1V823.5M69.5 804.2h2.8M69.5 789.3h-2.8M77.5 795.8V833.6M77.5 825.2h2.8M77.5 804.2h-2.8M85.5 782.6V828.3M85.5 792.2h2.8M85.5 825.2h-2.8M93.5 724.1V804.2M93.5 743.1h2.8M93.5 792.2h-2.8M101.5 701.2V757.8M101.5 735.1h2.8M101.5 743.1h-2.8M109.5 731.3V763.8M109.5 752.7h2.8M109.5 735.1h-2.8M117.5 724.1V755.6M117.5 736.1h2.8M117.5 752.7h-2.8M125.5 721.4V766.4M125.5 762.3h2.8M125.5 736.1h-2.8M133.5 695.9V798.4M133.5 779.9h2.8M133.5 762.3h-2.8M141.5 700.2V786.7M141.5 705.1h2.8M141.5 779.9h-2.8M149.5 681.0V720.7M149.5 698.3h2.8M149.5 705.1h-2.8M157.5 681.9V707.5M157.5 698.3h2.8M157.5 698.3h-2.8M165.5 697.6V725.3M165.5 711.6h2.8M165.5 698.3h-2.8M173.5 702.2V748.9M173.5 734.4h2.8M173.5 711.6h-2.8M181.5 729.1V757.8M181.5 740.4h2.8M181.5 734.4h-2.8M189.5 707.9V750.5M189.5 723.1h2.8M189.5 740.4h-2.8M197.5 703.1V729.1M197.5 728.4h2.8M197.5 723.1h-2.8M205.5 719.3V749.8M205.5 740.4h2.8M205.5 728.4h-2.8M213.5 707.9V752.7M213.5 714.4h2.8M213.5 740.4h-2.8M221.5 704.3V739.7M221.5 722.4h2.8M221.5 714.4h-2.8M229.5 709.1V737.6M229.5 718.3h2.8M229.5 722.4h-2.8M237.5 664.1V718.3M237.5 671.4h2.8M237.5 718.3h-2.8M245.5 644.2V688.2M245.5 648.5h2.8M245.5 671.4h-2.8M253.5 626.1V651.9M253.5 636.2h2.8M253.5 648.5h-2.8M261.5 634.0V667.5M261.5 655.5h2.8M261.5 636.2h-2.8M269.5 646.1V664.6M269.5 661.5h2.8M269.5 655.5h-2.8M277.5 630.9V673.8M277.5 636.2h2.8M277.5 661.5h-2.8M285.5 632.1V653.8M285.5 648.3h2.8M285.5 636.2h-2.8M293.5 636.2V664.6M293.5 657.9h2.8M293.5 648.3h-2.8M301.5 608.1V662.7M301.5 630.9h2.8M301.5 657.9h-2.8M309.5 618.2V637.7M309.5 627.3h2.8M309.5 630.9h-2.8M317.5 612.1V639.8M317.5 634.5h2.8M317.5 627.3h-2.8M325.5 612.8V659.8M325.5 621.3h2.8M325.5 634.5h-2.8M333.5 603.2V637.6M333.5 609.9h2.8M333.5 621.3h-2.8M341.5 544.2V612.8M341.5 544.7h2.8M341.5 609.9h-2.8M349.5 543.0V564.7M349.5 562.3h2.8M349.5 544.7h-2.8M357.5 520.2V563.5M357.5 526.9h2.8M357.5 562.3h-2.8M365.5 494.9V541.8M365.5 509.3h2.8M365.5 526.9h-2.8M373.5 470.8V526.2M373.5 476.4h2.8M373.5 509.3h-2.8M381.5 408.2V479.7M381.5 425.6h2.8M381.5 476.4h-2.8M389.5 405.8V440.7M389.5 428.2h2.8M389.5 425.6h-2.8M397.5 425.8V460.7M397.5 454.2h2.8M397.5 428.2h-2.8M405.5 439.5V474.4M405.5 454.2h2.8M405.5 454.2h-2.8M413.5 449.2V502.6M413.5 483.6h2.8M413.5 454.2h-2.8M421.5 452.8V488.4M421.5 479.2h2.8M421.5 483.6h-2.8M429.5 479.2V512.9M429.5 497.3h2.8M429.5 479.2h-2.8M437.5 482.1V513.4M437.5 507.2h2.8M437.5 497.3h-2.8M445.5 504.0V533.9M445.5 519.4h2.8M445.5 507.2h-2.8M453.5 498.5V536.5M453.5 504.5h2.8M453.5 519.4h-2.8M461.5 486.5V533.4M461.5 527.4h2.8M461.5 504.5h-2.8M469.5 493.7V545.9M469.5 514.4h2.8M469.5 527.4h-2.8M477.5 483.6V517.0M477.5 503.3h2.8M477.5 514.4h-2.8M485.5 494.2V519.7M485.5 506.2h2.8M485.5 503.3h-2.8M493.5 459.3V506.9M493.5 465.3h2.8M493.5 506.2h-2.8M501.5 443.9V474.4M501.5 461.9h2.8M501.5 465.3h-2.8M509.5 462.4V495.6M509.5 484.8h2.8M509.5 461.9h-2.8M517.5 474.4V524.5M517.5 514.6h2.8M517.5 484.8h-2.8M525.5 504.0V533.9M525.5 527.9h2.8M525.5 514.6h-2.8M533.5 488.9V537.7M533.5 498.0h2.8M533.5 527.9h-2.8M541.5 474.4V501.6M541.5 488.4h2.8M541.5 498.0h-2.8M549.5 479.2V512.9M549.5 491.3h2.8M549.5 488.4h-2.8M557.5 434.2V493.7M557.5 435.4h2.8M557.5 491.3h-2.8M565.5 416.2V442.4M565.5 427.0h2.8M565.5 435.4h-2.8M573.5 423.4V450.8M573.5 445.5h2.8M573.5 427.0h-2.8M581.5 441.9V466.7M581.5 464.3h2.8M581.5 445.5h-2.8M589.5 440.0V465.5M589.5 447.0h2.8M589.5 464.3h-2.8M597.5 442.7V489.6M597.5 477.3h2.8M597.5 447.0h-2.8M605.5 472.0V501.6M605.5 482.1h2.8M605.5 477.3h-2.8M613.5 463.6V499.7M613.5 493.2h2.8M613.5 482.1h-2.8M621.5 488.4V517.0M621.5 496.1h2.8M621.5 493.2h-2.8M629.5 495.4V514.6M629.5 508.1h2.8M629.5 496.1h-2.8M637.5 477.3V514.6M637.5 484.8h2.8M637.5 508.1h-2.8M645.5 463.4V491.8M645.5 487.0h2.8M645.5 484.8h-2.8M653.5 478.1V500.3M653.5 491.1h2.8M653.5 487.0h-2.8M661.5 491.1V539.5M661.5 535.2h2.8M661.5 491.1h-2.8M669.5 531.1V559.9M669.5 548.4h2.8M669.5 535.2h-2.8M677.5 537.1V560.4M677.5 543.6h2.8M677.5 548.4h-2.8M685.5 517.8V571.3M685.5 556.8h2.8M685.5 543.6h-2.8M693.5 555.6V578.5M693.5 568.4h2.8M693.5 556.8h-2.8M701.5 550.1V588.6M701.5 580.2h2.8M701.5 568.4h-2.8M709.5 570.1V585.7M709.5 578.5h2.8M709.5 580.2h-2.8M717.5 574.1V599.4M717.5 583.3h2.8M717.5 578.5h-2.8M725.5 554.4V586.2M725.5 572.0h2.8M725.5 583.3h-2.8M733.5 546.0V578.5M733.5 554.9h2.8M733.5 572.0h-2.8M741.5 553.2V588.6M741.5 571.3h2.8M741.5 554.9h-2.8M749.5 538.8V569.3M749.5 554.9h2.8M749.5 571.3h-2.8M757.5 535.2V560.4M757.5 541.2h2.8M757.5 554.9h-2.8M765.5 534.4V571.7M765.5 536.4h2.8M765.5 541.2h-2.8M773.5 509.4V536.8M773.5 516.6h2.8M773.5 536.4h-2.8M781.5 474.3V521.4M781.5 481.0h2.8M781.5 516.6h-2.8M789.5 468.2V492.6M789.5 474.5h2.8M789.5 481.0h-2.8M797.5 468.2V503.4M797.5 495.4h2.8M797.5 474.5h-2.8M805.5 486.3V516.6M805.5 490.4h2.8M805.5 495.4h-2.8M813.5 466.1V494.7M813.5 480.5h2.8M813.5 490.4h-2.8M821.5 461.0V483.4M821.5 469.4h2.8M821.5 480.5h-2.8M829.5 443.0V476.7M829.5 449.5h2.8M829.5 469.4h-2.8M837.5 431.2V454.8M837.5 436.5h2.8M837.5 449.5h-2.8M845.5 422.7V449.7M845.5 444.4h2.8M845.5 436.5h-2.8M853.5 438.2V490.6M853.5 487.0h2.8M853.5 444.4h-2.8M861.5 481.0V518.3M861.5 498.3h2.8M861.5 487.0h-2.8M869.5 490.6V515.9M869.5 501.5h2.8M869.5 498.3h-2.8M877.5 466.1V499.0M877.5 468.5h2.8M877.5 501.5h-2.8M885.5 434.5V473.8M885.5 444.9h2.8M885.5 468.5h-2.8M893.5 433.3V456.9M893.5 443.7h2.8M893.5 444.9h-2.8M901.5 406.4V446.8M901.5 411.9h2.8M901.5 443.7h-2.8M909.5 401.1V417.7M909.5 411.2h2.8M909.5 411.9h-2.8M917.5 381.1V412.9M917.5 387.6h2.8M917.5 411.2h-2.8M925.5 355.1V400.8M925.5 396.0h2.8M925.5 387.6h-2.8M933.5 359.9V396.0M933.5 378.7h2.8M933.5 396.0h-2.8M941.5 378.0V411.9M941.5 402.8h2.8M941.5 378.7h-2.8M949.5 382.8V408.1M949.5 401.6h2.8M949.5 402.8h-2.8M957.5 375.1V408.1M957.5 388.8h2.8M957.5 401.6h-2.8M965.5 362.8V394.8M965.5 381.5h2.8M965.5 388.8h-2.8M973.5 373.8V409.9M973.5 381.5h2.8M973.5 381.5h-2.8M981.5 359.9V412.8M981.5 400.8h2.8M981.5 381.5h-2.8M989.5 400V464.4M989.5 455h2.8M989.5 400.8h-2.8M997.5 437.8V472.8M997.5 447h2.8M997.5 455h-2.8M1005.5 422V461M1005.5 440h2.8M1005.5 447h-2.8M1013.5 419V452M1013.5 445h2.8M1013.5 440h-2.8M1021.5 434V456.7M1021.5 450h2.8M1021.5 445h-2.8M1029.5 366.4V455.5M1029.5 370.2h2.8M1029.5 450h-2.8M1037.5 332.9V379.1M1037.5 344.2h2.8M1037.5 370.2h-2.8M1045.5 319.4V346.6M1045.5 329.1h2.8M1045.5 344.2h-2.8M1053.5 323.1V373.1M1053.5 359.4h2.8M1053.5 329.1h-2.8M1061.5 349.0V376.0M1061.5 359.9h2.8M1061.5 359.4h-2.8M1069.5 325.0V369.5M1069.5 329.8h2.8M1069.5 359.9h-2.8M1077.5 320.9V366.4M1077.5 350.3h2.8M1077.5 329.8h-2.8M1085.5 346.2V359.2M1085.5 352.7h2.8M1085.5 350.3h-2.8M1093.5 331.0V371.4M1093.5 350.3h2.8M1093.5 352.7h-2.8M1101.5 338.2V372.6M1101.5 353.9h2.8M1101.5 350.3h-2.8M1109.5 323.1V364.0M1109.5 327.9h2.8M1109.5 353.9h-2.8M1117.5 290.8V340.1M1117.5 298.0h2.8M1117.5 327.9h-2.8M1125.5 290.1V312.5M1125.5 303.3h2.8M1125.5 298.0h-2.8M1133.5 284.1V315.8M1133.5 287.7h2.8M1133.5 303.3h-2.8M1141.5 249.9V290.1M1141.5 257.6h2.8M1141.5 287.7h-2.8M1149.5 246.8V267.9M1149.5 250.8h2.8M1149.5 257.6h-2.8M1157.5 202.9V252.0M1157.5 224.6h2.8M1157.5 250.8h-2.8M1165.5 225.1V284.1M1165.5 281.2h2.8M1165.5 224.6h-2.8M1173.5 246.0V299.0M1173.5 252.3h2.8M1173.5 281.2h-2.8M1181.5 246.0V286.0M1181.5 276.4h2.8M1181.5 252.3h-2.8M1189.5 254.0V332.2M1189.5 320.2h2.8M1189.5 276.4h-2.8M1197.5 310.1V339.4M1197.5 328.6h2.8M1197.5 320.2h-2.8M1205.5 309.3V340.6M1205.5 320.2h2.8M1205.5 328.6h-2.8M1213.5 292.5V325.0M1213.5 300.9h2.8M1213.5 320.2h-2.8M1221.5 275.2V310.5M1221.5 304.5h2.8M1221.5 300.9h-2.8M1229.5 305.7V353.1M1229.5 339.4h2.8M1229.5 304.5h-2.8M1237.5 323.8V356.8M1237.5 341.8h2.8M1237.5 339.4h-2.8M1245.5 329.8V351.5M1245.5 344.2h2.8M1245.5 341.8h-2.8M1253.5 321.4V352.7M1253.5 332.2h2.8M1253.5 344.2h-2.8M1261.5 308.1V373.1M1261.5 363.5h2.8M1261.5 332.2h-2.8M1269.5 361.1V411.6M1269.5 399.6h2.8M1269.5 363.5h-2.8M1277.5 377.9V416.4M1277.5 399.6h2.8M1277.5 399.6h-2.8M1285.5 350.3V454M1285.5 420h2.8M1285.5 399.6h-2.8M1293.5 426V464.8M1293.5 450h2.8M1293.5 420h-2.8M1301.5 415.5V457.6M1301.5 425h2.8M1301.5 450h-2.8M1309.5 410.6V451.6M1309.5 447h2.8M1309.5 425h-2.8M1317.5 431V484.7M1317.5 470h2.8M1317.5 447h-2.8M1325.5 459.4V478.7M1325.5 465h2.8M1325.5 470h-2.8M1333.5 443V472M1333.5 462h2.8M1333.5 465h-2.8M1341.5 445V485.3M1341.5 478h2.8M1341.5 462h-2.8M1349.5 426.3V481.7M1349.5 440h2.8M1349.5 478h-2.8M1357.5 420.9V488.3M1357.5 470h2.8M1357.5 440h-2.8M1365.5 450.8V475M1365.5 458.3h2.8M1365.5 470h-2.8M1373.5 442.9V475.8M1373.5 474h2.8M1373.5 458.3h-2.8M1381.5 447V501M1381.5 490h2.8M1381.5 474h-2.8M1389.5 457.6V505.7M1389.5 470h2.8M1389.5 490h-2.8M1397.5 431V471.8M1397.5 468h2.8M1397.5 470h-2.8M1405.5 475.4V513.9M1405.5 497h2.8M1405.5 468h-2.8M1413.5 483.2V530.7M1413.5 510h2.8M1413.5 497h-2.8M1421.5 479V524.7M1421.5 500h2.8M1421.5 510h-2.8M1429.5 489.8V517.5M1429.5 495h2.8M1429.5 500h-2.8M1437.5 468.1V512.7M1437.5 485h2.8M1437.5 495h-2.8M1445.5 452.3V535.6M1445.5 524.5h2.8M1445.5 485h-2.8M1450.7 524.5h2.8" stroke="#5fd25f" stroke-width="1.25" fill="none"/>
<g stroke="#c8302a" stroke-width="1.15" stroke-dasharray="1.5 3" fill="none"><path d="M997.4 457.2L1005.3 463.3"/><path d="M1005.8 442.2L1013.0 448.3"/><path d="M1013.5 423.9L1021.9000000000001 431"/><path d="M1021.3 441L1029.5 448.3"/><path d="M1029.7 450L1037.5 412"/><path d="M1197.7 322.5L1205.4 329.2"/><path d="M1205.9 332.2L1220.8 294.3"/><path d="M1229.9 302.4L1237.1 308.1"/><path d="M1237.8 336.4L1245.1 343.6"/><path d="M1245.8 341.4L1253.1 347.2"/><path d="M1254 338.2L1261.2 345.4"/><path d="M1261.8 326.2L1269.0 333.4"/><path d="M1269.9 363.5L1277.4 370.1"/><path d="M1277.5 398.4L1285.7 403.6"/><path d="M1285.9 398.4L1293.1 359.3"/><path d="M1293.2 449.4L1300.6 456.4"/><path d="M1301.6 447.4L1309.0 454.6"/><path d="M1309.1 420.3L1317.1 427.3"/><path d="M1317.8 446.2L1325.0 453.4"/><path d="M1325.7 466.6L1333.1 473.2"/><path d="M1333.8 462.6L1348.7 467.8"/><path d="M1350 480.5L1357.2 442.5"/><path d="M1357.9 432.6L1365.0 437.7"/><path d="M1365.9 476.6L1388.5 482.3"/><path d="M1389.8 487.7L1396.9 494.3"/><path d="M1397.6 466.6L1405.1 473"/><path d="M1405.5 507.6L1413.0 514.5"/><path d="M1413.7 493.4L1420.5 500.9"/><path d="M1421.7 525.3L1428.9 487.4"/><path d="M1429.6 496.1L1437.1 503.3"/><path d="M1437.8 510.3L1445.1 471.2"/><path d="M1445.8 481.4L1453.2 488"/></g><path d="M994.0 419.2h6.8M1002.4 404.2h6.8M1010.1 385.9h6.8M1017.9 403.0h6.8M1026.3 412.0h6.8M1194.3 284.5h6.8M1202.5 294.2h6.8M1226.5 264.4h6.8M1234.4 298.4h6.8M1242.4 303.4h6.8M1250.6 300.2h6.8M1258.4 288.2h6.8M1266.5 325.5h6.8M1274.1 360.4h6.8M1282.5 360.4h6.8M1289.8 411.4h6.8M1298.2 409.4h6.8M1305.7 382.3h6.8M1314.4 408.2h6.8M1322.3 428.6h6.8M1330.4 424.6h6.8M1346.6 442.5h6.8M1354.5 394.6h6.8M1362.5 438.6h6.8M1386.4 449.7h6.8M1394.2 428.6h6.8M1402.1 469.6h6.8M1410.3 455.4h6.8M1418.3 487.3h6.8M1426.2 458.1h6.8M1434.4 472.3h6.8M1442.4 443.4h6.8M1450.2 486.5h6.8" stroke="#c83c38" stroke-width="1.3" fill="none"/><path d="M994.0 464.1h6.8M1002.4 449.1h6.8M1010.1 430.8h6.8M1017.9 447.9h6.8M1026.3 456.9h6.8M1194.3 329.4h6.8M1202.5 339.1h6.8M1226.5 309.3h6.8M1234.4 343.3h6.8M1242.4 348.3h6.8M1250.6 345.1h6.8M1258.4 333.1h6.8M1266.5 370.4h6.8M1274.1 405.3h6.8M1282.5 405.3h6.8M1289.8 456.3h6.8M1298.2 454.3h6.8M1305.7 427.2h6.8M1314.4 453.1h6.8M1322.3 473.5h6.8M1330.4 469.5h6.8M1346.6 487.4h6.8M1354.5 439.5h6.8M1362.5 483.5h6.8M1386.4 494.6h6.8M1394.2 473.5h6.8M1402.1 514.5h6.8M1410.3 500.3h6.8M1418.3 532.2h6.8M1426.2 503.0h6.8M1434.4 517.2h6.8M1442.4 488.3h6.8M1450.2 531.4h6.8" stroke="#2230b4" stroke-width="1.35" fill="none"/><g fill="#e0a62c" stroke="#fffbe0" stroke-width="1" stroke-linejoin="round"><path d="M1010.3 459.4v7.8l-5.1-3.9z"/><path d="M1018.0 444.4v7.8l-5.1-3.9z"/><path d="M1026.9 427.1v7.8l-5.1-3.9z"/><path d="M1034.5 444.4v7.8l-5.1-3.9z"/><path d="M1042.5 408.1v7.8l-5.1-3.9z"/><path d="M1210.4 325.3v7.8l-5.1-3.9z"/><path d="M1225.8 290.4v7.8l-5.1-3.9z"/><path d="M1242.1 304.2v7.8l-5.1-3.9z"/><path d="M1250.1 339.7v7.8l-5.1-3.9z"/><path d="M1258.1 343.3v7.8l-5.1-3.9z"/><path d="M1266.2 341.5v7.8l-5.1-3.9z"/><path d="M1274.0 329.5v7.8l-5.1-3.9z"/><path d="M1282.4 366.2v7.8l-5.1-3.9z"/><path d="M1290.7 399.7v7.8l-5.1-3.9z"/><path d="M1298.1 355.4v7.8l-5.1-3.9z"/><path d="M1305.6 452.5v7.8l-5.1-3.9z"/><path d="M1314.0 450.7v7.8l-5.1-3.9z"/><path d="M1322.1 423.4v7.8l-5.1-3.9z"/><path d="M1330.0 449.5v7.8l-5.1-3.9z"/><path d="M1338.1 469.3v7.8l-5.1-3.9z"/><path d="M1353.7 463.9v7.8l-5.1-3.9z"/><path d="M1362.2 438.6v7.8l-5.1-3.9z"/><path d="M1370.0 433.8v7.8l-5.1-3.9z"/><path d="M1393.5 478.4v7.8l-5.1-3.9z"/><path d="M1401.9 490.4v7.8l-5.1-3.9z"/><path d="M1410.1 469.1v7.8l-5.1-3.9z"/><path d="M1418.0 510.6v7.8l-5.1-3.9z"/><path d="M1425.5 497.0v7.8l-5.1-3.9z"/><path d="M1433.9 483.5v7.8l-5.1-3.9z"/><path d="M1442.1 499.4v7.8l-5.1-3.9z"/><path d="M1450.1 467.3v7.8l-5.1-3.9z"/><path d="M1458.2 484.1v7.8l-5.1-3.9z"/></g><g fill="#fa0808" stroke="#ffffff" stroke-width="1.05" stroke-linejoin="round"><path d="M991.2 455.3h2.7v-2l4 3.9l-4 3.9v-2h-2.7l.7-1.9z"/><path d="M999.6 440.3h2.7v-2l4 3.9l-4 3.9v-2h-2.7l.7-1.9z"/><path d="M1007.3 422.0h2.7v-2l4 3.9l-4 3.9v-2h-2.7l.7-1.9z"/><path d="M1015.1 439.1h2.7v-2l4 3.9l-4 3.9v-2h-2.7l.7-1.9z"/><path d="M1023.5 448.1h2.7v-2l4 3.9l-4 3.9v-2h-2.7l.7-1.9z"/><path d="M1191.5 320.6h2.7v-2l4 3.9l-4 3.9v-2h-2.7l.7-1.9z"/><path d="M1199.7 330.3h2.7v-2l4 3.9l-4 3.9v-2h-2.7l.7-1.9z"/><path d="M1223.7 300.5h2.7v-2l4 3.9l-4 3.9v-2h-2.7l.7-1.9z"/><path d="M1231.6 334.5h2.7v-2l4 3.9l-4 3.9v-2h-2.7l.7-1.9z"/><path d="M1239.6 339.5h2.7v-2l4 3.9l-4 3.9v-2h-2.7l.7-1.9z"/><path d="M1247.8 336.3h2.7v-2l4 3.9l-4 3.9v-2h-2.7l.7-1.9z"/><path d="M1255.6 324.3h2.7v-2l4 3.9l-4 3.9v-2h-2.7l.7-1.9z"/><path d="M1263.7 361.6h2.7v-2l4 3.9l-4 3.9v-2h-2.7l.7-1.9z"/><path d="M1271.3 396.5h2.7v-2l4 3.9l-4 3.9v-2h-2.7l.7-1.9z"/><path d="M1279.7 396.5h2.7v-2l4 3.9l-4 3.9v-2h-2.7l.7-1.9z"/><path d="M1287.0 447.5h2.7v-2l4 3.9l-4 3.9v-2h-2.7l.7-1.9z"/><path d="M1295.4 445.5h2.7v-2l4 3.9l-4 3.9v-2h-2.7l.7-1.9z"/><path d="M1302.9 418.4h2.7v-2l4 3.9l-4 3.9v-2h-2.7l.7-1.9z"/><path d="M1311.6 444.3h2.7v-2l4 3.9l-4 3.9v-2h-2.7l.7-1.9z"/><path d="M1319.5 464.7h2.7v-2l4 3.9l-4 3.9v-2h-2.7l.7-1.9z"/><path d="M1327.6 460.7h2.7v-2l4 3.9l-4 3.9v-2h-2.7l.7-1.9z"/><path d="M1343.8 478.6h2.7v-2l4 3.9l-4 3.9v-2h-2.7l.7-1.9z"/><path d="M1351.7 430.7h2.7v-2l4 3.9l-4 3.9v-2h-2.7l.7-1.9z"/><path d="M1359.7 474.7h2.7v-2l4 3.9l-4 3.9v-2h-2.7l.7-1.9z"/><path d="M1383.6 485.8h2.7v-2l4 3.9l-4 3.9v-2h-2.7l.7-1.9z"/><path d="M1391.4 464.7h2.7v-2l4 3.9l-4 3.9v-2h-2.7l.7-1.9z"/><path d="M1399.3 505.7h2.7v-2l4 3.9l-4 3.9v-2h-2.7l.7-1.9z"/><path d="M1407.5 491.5h2.7v-2l4 3.9l-4 3.9v-2h-2.7l.7-1.9z"/><path d="M1415.5 523.4h2.7v-2l4 3.9l-4 3.9v-2h-2.7l.7-1.9z"/><path d="M1423.4 494.2h2.7v-2l4 3.9l-4 3.9v-2h-2.7l.7-1.9z"/><path d="M1431.6 508.4h2.7v-2l4 3.9l-4 3.9v-2h-2.7l.7-1.9z"/><path d="M1439.6 479.5h2.7v-2l4 3.9l-4 3.9v-2h-2.7l.7-1.9z"/><path d="M1447.4 522.6h2.7v-2l4 3.9l-4 3.9v-2h-2.7l.7-1.9z"/></g>
<path d="M4.5 849.5V170.5H1836.5V849.5H4" fill="none" stroke="#fff" stroke-width="1.05"/>
<line x1="1836.5" y1="231.5" x2="1839.5" y2="231.5" stroke="#fff" stroke-width="1.1" />
<line x1="1836.5" y1="312.5" x2="1839.5" y2="312.5" stroke="#fff" stroke-width="1.1" />
<line x1="1836.5" y1="393.5" x2="1839.5" y2="393.5" stroke="#fff" stroke-width="1.1" />
<line x1="1836.5" y1="474.5" x2="1839.5" y2="474.5" stroke="#fff" stroke-width="1.1" />
<line x1="1836.5" y1="555.5" x2="1839.5" y2="555.5" stroke="#fff" stroke-width="1.1" />
<line x1="1836.5" y1="636.5" x2="1839.5" y2="636.5" stroke="#fff" stroke-width="1.1" />
<line x1="1836.5" y1="717.5" x2="1839.5" y2="717.5" stroke="#fff" stroke-width="1.1" />
<line x1="1836.5" y1="798.5" x2="1839.5" y2="798.5" stroke="#fff" stroke-width="1.1" />
<line x1="5.5" y1="849.5" x2="5.5" y2="852.8" stroke="#fff" stroke-width="1.1" />
<line x1="85.5" y1="849.5" x2="85.5" y2="851.6" stroke="#fff" stroke-width="1.1" />
<line x1="165.5" y1="849.5" x2="165.5" y2="852.8" stroke="#fff" stroke-width="1.1" />
<line x1="245.5" y1="849.5" x2="245.5" y2="851.6" stroke="#fff" stroke-width="1.1" />
<line x1="325.5" y1="849.5" x2="325.5" y2="852.8" stroke="#fff" stroke-width="1.1" />
<line x1="405.5" y1="849.5" x2="405.5" y2="851.6" stroke="#fff" stroke-width="1.1" />
<line x1="485.5" y1="849.5" x2="485.5" y2="852.8" stroke="#fff" stroke-width="1.1" />
<line x1="565.5" y1="849.5" x2="565.5" y2="851.6" stroke="#fff" stroke-width="1.1" />
<line x1="645.5" y1="849.5" x2="645.5" y2="852.8" stroke="#fff" stroke-width="1.1" />
<line x1="725.5" y1="849.5" x2="725.5" y2="851.6" stroke="#fff" stroke-width="1.1" />
<line x1="805.5" y1="849.5" x2="805.5" y2="852.8" stroke="#fff" stroke-width="1.1" />
<line x1="885.5" y1="849.5" x2="885.5" y2="851.6" stroke="#fff" stroke-width="1.1" />
<line x1="965.5" y1="849.5" x2="965.5" y2="852.8" stroke="#fff" stroke-width="1.1" />
<line x1="1045.5" y1="849.5" x2="1045.5" y2="851.6" stroke="#fff" stroke-width="1.1" />
<line x1="1125.5" y1="849.5" x2="1125.5" y2="852.8" stroke="#fff" stroke-width="1.1" />
<line x1="1205.5" y1="849.5" x2="1205.5" y2="851.6" stroke="#fff" stroke-width="1.1" />
<line x1="1285.5" y1="849.5" x2="1285.5" y2="852.8" stroke="#fff" stroke-width="1.1" />
<line x1="1365.5" y1="849.5" x2="1365.5" y2="851.6" stroke="#fff" stroke-width="1.1" />
<line x1="1445.5" y1="849.5" x2="1445.5" y2="852.8" stroke="#fff" stroke-width="1.1" />
<line x1="1525.5" y1="849.5" x2="1525.5" y2="851.6" stroke="#fff" stroke-width="1.1" />
<line x1="1605.5" y1="849.5" x2="1605.5" y2="852.8" stroke="#fff" stroke-width="1.1" />
<line x1="1685.5" y1="849.5" x2="1685.5" y2="851.6" stroke="#fff" stroke-width="1.1" />
<line x1="1765.5" y1="849.5" x2="1765.5" y2="852.8" stroke="#fff" stroke-width="1.1" />
<line x1="85.5" y1="170.5" x2="85.5" y2="173.5" stroke="#fff" stroke-width="1.1" />
<line x1="165.5" y1="170.5" x2="165.5" y2="173.5" stroke="#fff" stroke-width="1.1" />
<line x1="245.5" y1="170.5" x2="245.5" y2="173.5" stroke="#fff" stroke-width="1.1" />
<line x1="325.5" y1="170.5" x2="325.5" y2="173.5" stroke="#fff" stroke-width="1.1" />
<line x1="405.5" y1="170.5" x2="405.5" y2="173.5" stroke="#fff" stroke-width="1.1" />
<line x1="485.5" y1="170.5" x2="485.5" y2="173.5" stroke="#fff" stroke-width="1.1" />
<line x1="565.5" y1="170.5" x2="565.5" y2="173.5" stroke="#fff" stroke-width="1.1" />
<line x1="645.5" y1="170.5" x2="645.5" y2="173.5" stroke="#fff" stroke-width="1.1" />
<line x1="725.5" y1="170.5" x2="725.5" y2="173.5" stroke="#fff" stroke-width="1.1" />
<line x1="805.5" y1="170.5" x2="805.5" y2="173.5" stroke="#fff" stroke-width="1.1" />
<line x1="885.5" y1="170.5" x2="885.5" y2="173.5" stroke="#fff" stroke-width="1.1" />
<line x1="965.5" y1="170.5" x2="965.5" y2="173.5" stroke="#fff" stroke-width="1.1" />
<line x1="1045.5" y1="170.5" x2="1045.5" y2="173.5" stroke="#fff" stroke-width="1.1" />
<line x1="1125.5" y1="170.5" x2="1125.5" y2="173.5" stroke="#fff" stroke-width="1.1" />
<line x1="1205.5" y1="170.5" x2="1205.5" y2="173.5" stroke="#fff" stroke-width="1.1" />
<line x1="1285.5" y1="170.5" x2="1285.5" y2="173.5" stroke="#fff" stroke-width="1.1" />
<line x1="1365.5" y1="170.5" x2="1365.5" y2="173.5" stroke="#fff" stroke-width="1.1" />
<line x1="1445.5" y1="170.5" x2="1445.5" y2="173.5" stroke="#fff" stroke-width="1.1" />
<line x1="1525.5" y1="170.5" x2="1525.5" y2="173.5" stroke="#fff" stroke-width="1.1" />
<line x1="1605.5" y1="170.5" x2="1605.5" y2="173.5" stroke="#fff" stroke-width="1.1" />
<line x1="1685.5" y1="170.5" x2="1685.5" y2="173.5" stroke="#fff" stroke-width="1.1" />
<line x1="1765.5" y1="170.5" x2="1765.5" y2="173.5" stroke="#fff" stroke-width="1.1" />
<path d="M1459.8 171h17.5l-8.75 9z" fill="#7c8a9c"/>
<text x="9.5" y="188.6" font-size="15.5" fill="#f2f2f2" textLength="100.2" lengthAdjust="spacingAndGlyphs" >EURUSD,Daily</text>
<text x="120.6" y="188.6" font-size="15.5" fill="#f2f2f2" textLength="250.2" lengthAdjust="spacingAndGlyphs" >1.28589 1.28589 1.28589 1.28589</text>
<text x="1845.2" y="237.9" font-size="16.1" fill="#f2f2f2" textLength="57.5" lengthAdjust="spacingAndGlyphs" >1.36365</text>
<text x="1845.2" y="318.9" font-size="16.1" fill="#f2f2f2" textLength="57.5" lengthAdjust="spacingAndGlyphs" >1.34215</text>
<text x="1845.2" y="399.9" font-size="16.1" fill="#f2f2f2" textLength="57.5" lengthAdjust="spacingAndGlyphs" >1.32065</text>
<text x="1845.2" y="480.9" font-size="16.1" fill="#f2f2f2" textLength="57.5" lengthAdjust="spacingAndGlyphs" >1.29915</text>
<text x="1845.2" y="561.9" font-size="16.1" fill="#f2f2f2" textLength="57.5" lengthAdjust="spacingAndGlyphs" >1.27765</text>
<text x="1845.2" y="642.9" font-size="16.1" fill="#f2f2f2" textLength="57.5" lengthAdjust="spacingAndGlyphs" >1.25615</text>
<text x="1845.2" y="723.9" font-size="16.1" fill="#f2f2f2" textLength="57.5" lengthAdjust="spacingAndGlyphs" >1.23465</text>
<text x="1845.2" y="804.9" font-size="16.1" fill="#f2f2f2" textLength="57.5" lengthAdjust="spacingAndGlyphs" >1.21340</text>
<rect x="1838.1" y="515.2" width="70.8" height="18.7" fill="#ffffff" />
<text x="1845.2" y="530.7" font-size="16.1" fill="#000" textLength="57.5" lengthAdjust="spacingAndGlyphs" >1.28589</text>
<text x="5" y="868.9" font-size="16.2" fill="#f2f2f2" textLength="82.5" lengthAdjust="spacingAndGlyphs" >11 Jul 2012</text>
<text x="165" y="868.9" font-size="16.2" fill="#f2f2f2" textLength="82.5" lengthAdjust="spacingAndGlyphs" >8 Aug 2012</text>
<text x="325" y="868.9" font-size="16.2" fill="#f2f2f2" textLength="79" lengthAdjust="spacingAndGlyphs" >5 Sep 2012</text>
<text x="485" y="868.9" font-size="16.2" fill="#f2f2f2" textLength="77.5" lengthAdjust="spacingAndGlyphs" >3 Oct 2012</text>
<text x="645" y="868.9" font-size="16.2" fill="#f2f2f2" textLength="86.5" lengthAdjust="spacingAndGlyphs" >31 Oct 2012</text>
<text x="805" y="868.9" font-size="16.2" fill="#f2f2f2" textLength="90" lengthAdjust="spacingAndGlyphs" >28 Nov 2012</text>
<text x="965" y="868.9" font-size="16.2" fill="#f2f2f2" textLength="90" lengthAdjust="spacingAndGlyphs" >27 Dec 2012</text>
<text x="1125" y="868.9" font-size="16.2" fill="#f2f2f2" textLength="86.5" lengthAdjust="spacingAndGlyphs" >28 Jan 2013</text>
<text x="1285" y="868.9" font-size="16.2" fill="#f2f2f2" textLength="87.5" lengthAdjust="spacingAndGlyphs" >25 Feb 2013</text>
<text x="1445" y="868.9" font-size="16.2" fill="#f2f2f2" textLength="88.5" lengthAdjust="spacingAndGlyphs" >25 Mar 2013</text>
<text x="1413.7" y="358.8" font-size="16" fill="#eeee48" textLength="31" lengthAdjust="spacingAndGlyphs" >61.8</text>
<text x="1413.7" y="379.8" font-size="16" fill="#eeee48" textLength="31" lengthAdjust="spacingAndGlyphs" >50.0</text>
<text x="1413.7" y="400.8" font-size="16" fill="#eeee48" textLength="31" lengthAdjust="spacingAndGlyphs" >38.2</text>
<text x="16.3" y="483" font-size="15.8" fill="#f2f2f2" textLength="43.7" lengthAdjust="spacingAndGlyphs" >#33 sl</text>
<text x="16.3" y="520.8" font-size="15.8" fill="#f2f2f2" textLength="93" lengthAdjust="spacingAndGlyphs" >#33 sell 0.10</text>
<text x="16.3" y="527.5" font-size="15.8" fill="#f2f2f2" textLength="46" lengthAdjust="spacingAndGlyphs" >#33 tp</text>
<rect x="0" y="878.2" width="1920" height="2" fill="#ffffff" />
<line x1="0" y1="880.5" x2="1920" y2="880.5" stroke="#3c3c3c" stroke-width="1" />
<rect x="0" y="881" width="1920" height="35" fill="#f0f0f0" />
<rect x="0" y="881" width="1.5" height="33" fill="#a8a8a8" />
<text x="27.5" y="905" font-size="18.6" fill="#7d7d7d" textLength="106.5" lengthAdjust="spacingAndGlyphs" >USDCHF,H1</text>
<text x="174" y="905" font-size="18.6" fill="#7d7d7d" textLength="198.5" lengthAdjust="spacingAndGlyphs" >EURUSD,Daily (visual)</text>
<text x="410" y="905" font-size="18.6" fill="#7d7d7d" textLength="198.5" lengthAdjust="spacingAndGlyphs" >EURUSD,Daily (visual)</text>
<text x="646" y="905" font-size="18.6" fill="#7d7d7d" textLength="179" lengthAdjust="spacingAndGlyphs" >EURUSD,H4 (visual)</text>
<text x="862" y="905" font-size="18.6" fill="#7d7d7d" textLength="179" lengthAdjust="spacingAndGlyphs" >EURUSD,H4 (visual)</text>
<text x="1078.5" y="905" font-size="18.6" fill="#7d7d7d" textLength="178.0" lengthAdjust="spacingAndGlyphs" >EURUSD,H4 (visual)</text>
<text x="1294" y="905" font-size="18.6" fill="#7d7d7d" textLength="198.5" lengthAdjust="spacingAndGlyphs" >EURUSD,Daily (visual)</text>
<line x1="156.5" y1="883" x2="156.5" y2="912.5" stroke="#8c8c8c" stroke-width="1" />
<line x1="392.5" y1="883" x2="392.5" y2="912.5" stroke="#8c8c8c" stroke-width="1" />
<line x1="627.5" y1="883" x2="627.5" y2="912.5" stroke="#8c8c8c" stroke-width="1" />
<line x1="844" y1="883" x2="844" y2="912.5" stroke="#8c8c8c" stroke-width="1" />
<line x1="1060" y1="883" x2="1060" y2="912.5" stroke="#8c8c8c" stroke-width="1" />
<line x1="1276" y1="883" x2="1276" y2="912.5" stroke="#8c8c8c" stroke-width="1" />
<rect x="1512.5" y="879" width="235" height="35.5" fill="#ffffff" />
<path d="M1512.5 880.5V914.5H1747.5V880.5" fill="none" stroke="#000" stroke-width="1.3"/>
<text x="1531" y="905" font-size="18.6" fill="#000" textLength="197.7" lengthAdjust="spacingAndGlyphs" >EURUSD,Daily (visual)</text>
<path d="M1870.5 890v11.5l-6-5.75z M1897.5 890v11.5l6-5.75z" fill="#a6a6a6"/>
<rect x="0" y="916" width="1920" height="2.5" fill="#fbfbfb" />
<rect x="0" y="918.5" width="1920" height="51" fill="#f0f0f0" />
<rect x="28.5" y="924.5" width="1885" height="37.5" fill="#ffffff" stroke="#dcdcdc" stroke-width="1"/>
<path d="M9.8 929.8l7 7M16.8 929.8l-7 7" stroke="#000" stroke-width="1.7" fill="none"/>
<rect x="3" y="948.3" width="23" height="14.3" fill="#9db8dc" />
<path d="M7.2 950v11.5M7.2 955.7h14.5" stroke="#000" stroke-width="1.9" fill="none"/>
<circle cx="43.7" cy="944.6" r="6.3" fill="url(#gball)" stroke="#8e8e8e" stroke-width="1"/>
<text x="61.7" y="951.6" font-size="19.3" fill="#000" textLength="134" lengthAdjust="spacingAndGlyphs" >Strategy Tester</text>
<line x1="0" y1="969.5" x2="1920" y2="969.5" stroke="#a9a9a9" stroke-width="1.2" />
<rect x="0" y="970.2" width="1920" height="40" fill="#f0f0f0" />
<text x="3" y="999.2" font-size="18.6" fill="#000" textLength="161" lengthAdjust="spacingAndGlyphs" >For Help, press F1</text>
<text x="712.3" y="999.2" font-size="18.6" fill="#000" textLength="67.5" lengthAdjust="spacingAndGlyphs" >Default</text>
<line x1="706.5" y1="973.5" x2="706.5" y2="1008.5" stroke="#a3a3a3" stroke-width="1" />
<line x1="913.5" y1="973.5" x2="913.5" y2="1008.5" stroke="#a3a3a3" stroke-width="1" />
<line x1="1092.5" y1="973.5" x2="1092.5" y2="1008.5" stroke="#a3a3a3" stroke-width="1" />
<line x1="1216.5" y1="973.5" x2="1216.5" y2="1008.5" stroke="#a3a3a3" stroke-width="1" />
<line x1="1339.5" y1="973.5" x2="1339.5" y2="1008.5" stroke="#a3a3a3" stroke-width="1" />
<line x1="1457.5" y1="973.5" x2="1457.5" y2="1008.5" stroke="#a3a3a3" stroke-width="1" />
<line x1="1578.5" y1="973.5" x2="1578.5" y2="1008.5" stroke="#a3a3a3" stroke-width="1" />
<line x1="1695.5" y1="973.5" x2="1695.5" y2="1008.5" stroke="#a3a3a3" stroke-width="1" />
<rect x="1700.8" y="978" width="3.600" height="17.8" fill="#6f8f00"/><rect x="1700.8" y="997.0" width="3.600" height="4" fill="#0e4b6e"/><rect x="1705.7" y="978" width="3.600" height="16.3" fill="#6f8f00"/><rect x="1705.7" y="995.5" width="3.600" height="5.5" fill="#0e4b6e"/><rect x="1710.6" y="978" width="3.600" height="13.8" fill="#6f8f00"/><rect x="1710.6" y="993.0" width="3.600" height="8" fill="#0e4b6e"/><rect x="1715.5" y="978" width="3.600" height="11.3" fill="#6f8f00"/><rect x="1715.5" y="990.5" width="3.600" height="10.5" fill="#0e4b6e"/><rect x="1720.4" y="978" width="3.600" height="9.3" fill="#6f8f00"/><rect x="1720.4" y="988.5" width="3.600" height="12.5" fill="#0e4b6e"/><rect x="1725.3" y="978" width="3.600" height="6.8" fill="#6f8f00"/><rect x="1725.3" y="986.0" width="3.600" height="15" fill="#0e4b6e"/><rect x="1730.2" y="978" width="3.600" height="4.3" fill="#6f8f00"/><rect x="1730.2" y="983.5" width="3.600" height="17.5" fill="#0e4b6e"/><rect x="1735.1" y="978" width="3.600" height="2.3" fill="#6f8f00"/><rect x="1735.1" y="981.5" width="3.600" height="19.5" fill="#0e4b6e"/>
<text x="1747.5" y="999.2" font-size="18.6" fill="#000" textLength="132.5" lengthAdjust="spacingAndGlyphs" >162933/272 kb</text>
<rect x="0" y="1010" width="1920" height="70" fill="#0b0e16"/><rect x="7.500" y="1010" width="1.300" height="70" fill="#55585f"/><rect x="835" y="1010" width="81.200" height="70" fill="#3c4046"/><rect x="509.7" y="1075.800" width="67.3" height="4.200" fill="#b2dafa"/><rect x="593" y="1075.800" width="67.3" height="4.200" fill="#b2dafa"/><rect x="675.8" y="1075.800" width="67.2" height="4.200" fill="#b2dafa"/><rect x="758.9" y="1075.800" width="67.3" height="4.200" fill="#b2dafa"/><rect x="835" y="1075.800" width="81.2" height="4.200" fill="#b2dafa"/><rect x="925.1" y="1075.800" width="66.9" height="4.200" fill="#b2dafa"/><rect x="1340.4" y="1075.800" width="66.6" height="4.200" fill="#b2dafa"/><rect x="1506.1" y="1075.800" width="66.8" height="4.200" fill="#b2dafa"/><rect x="675.800" y="1075.800" width="15.400" height="4.200" fill="#8aa8c2"/><path d="M44.500 1030.800h27.500v21.500h-9.500l-5.500 5.500v-5.500h-12.500z" fill="#ffffff"/><path d="M50 1036.500h16.500M50 1041h16.500M50 1045.500h10" stroke="#20232c" stroke-width="1.500"/><circle cx="45.500" cy="1057.500" r="13.500" fill="#33363c" stroke="#85878c" stroke-width="1.300"/><text x="45.500" y="1065" font-size="21" font-weight="bold" fill="#fff" text-anchor="middle">1</text><text x="132.500" y="1036.200" font-size="19.800" fill="#fff" textLength="47.500" lengthAdjust="spacingAndGlyphs">21:18</text><text x="104.500" y="1069.400" font-size="19.800" fill="#fff" textLength="103" lengthAdjust="spacingAndGlyphs">09/03/2019</text><text x="231" y="1053.800" font-size="19.800" fill="#fff" textLength="39.500" lengthAdjust="spacingAndGlyphs">ENG</text><path d="M290.500 1041h4.500l6-5.500v19l-6-5.500h-4.500z" fill="none" stroke="#fff" stroke-width="1.300"/><path d="M304.500 1040.500q2.500 4.500 0 9M308.500 1037.500q4 7.500 0 15" fill="none" stroke="#fff" stroke-width="1.300"/><path d="M312.500 1035q5.500 10 0 20" fill="none" stroke="#9a9a9a" stroke-width="1.200"/><path d="M335 1035.500h23.500v16h-23.500M335 1035.500v19.500M346.500 1051.500v3.500M341 1055h11" fill="none" stroke="#fff" stroke-width="1.300"/><rect x="331.500" y="1036" width="6.500" height="8" fill="#0b0e16" stroke="#fff" stroke-width="1.200"/><path d="M378 1049l9-8.500 9 8.500" fill="none" stroke="#fff" stroke-width="1.500"/><circle cx="456" cy="1037.500" r="5" fill="none" stroke="#fff" stroke-width="1.800"/><path d="M449.500 1047.500q6.500-6 13 0" fill="none" stroke="#fff" stroke-width="1.800"/><circle cx="445" cy="1046" r="4.500" fill="none" stroke="#fff" stroke-width="1.800"/><path d="M438 1057.500q1-7.500 7-7.500t7 7.500" fill="none" stroke="#fff" stroke-width="1.800"/><g transform="translate(543.400,1044)"><path d="M-19.500 5C-22-9-9-17 5-13.500 17-10 20.500 1 15 9 9 17 0 13.500-5 15.500-11 18.500-17.500 13-19.500 5z" fill="#cfe3f3" stroke="#9db8cf" stroke-width=".8"/><circle cx="-7.500" cy="-3" r="3.300" fill="#4cb050"/><circle cx="1" cy="-6.800" r="3.300" fill="#f0a430"/><circle cx="-13.500" cy="2.300" r="3.200" fill="#e04634"/><circle cx="-3.700" cy="4" r="2.300" fill="#10141c"/><path d="M-1.800 17.800L11-9.500l2.800 1.300L1 19z" fill="#e08a3a"/><path d="M11-9.500q1-6 4.500-7.500 2.500 1.500 .8 5.500l-2.500 3.300z" fill="#e6c49a"/></g><g transform="translate(627,1044.500)"><path d="M-21 3.500l13-23 23 11.500 6 11.500-21 16z" fill="#f4edc6"/><path d="M-8-19.500l21 10M-6-16l20 9.500M15-8l6 11.500M13-4.500l5 9" stroke="#d8cf9a" stroke-width=".9" fill="none"/><path d="M-21 3.500l21 12 21-12v4l-21 12-21-12z" fill="#d4aa1e"/><path d="M-21 3.500l21 12 21-12" fill="none" stroke="#f0d45a" stroke-width="1.200"/><circle cx="-1.500" cy="-2" r="7.500" fill="#3a8ad4"/><path d="M-8.500-1q1-6 6-8.500 1 5-1 9t-2 7q-3-3-3-7.500z" fill="#3aa244"/><path d="M-3 5.500q1-4 5-5 2 3 0 6-3 .5-5-1z" fill="#ecd22a"/></g><g transform="translate(709.6,1044.500)"><path d="M-21 3.500l13-23 23 11.500 6 11.500-21 16z" fill="#f4edc6"/><path d="M-8-19.500l21 10M-6-16l20 9.500M15-8l6 11.500M13-4.500l5 9" stroke="#d8cf9a" stroke-width=".9" fill="none"/><path d="M-21 3.500l21 12 21-12v4l-21 12-21-12z" fill="#d4aa1e"/><path d="M-21 3.500l21 12 21-12" fill="none" stroke="#f0d45a" stroke-width="1.200"/><circle cx="-1.500" cy="-2" r="7.500" fill="#3a8ad4"/><path d="M-8.500-1q1-6 6-8.500 1 5-1 9t-2 7q-3-3-3-7.500z" fill="#3aa244"/><path d="M-3 5.500q1-4 5-5 2 3 0 6-3 .5-5-1z" fill="#ecd22a"/></g><g transform="translate(793,1044.900)"><circle r="19.500" fill="#db4437"/><path d="M0 0L-16.890 9.750A19.500 19.500 0 0 0 9.750 16.890z" fill="#0f9d58"/><path d="M0 0L9.750 16.890A19.500 19.500 0 0 0 16.890-9.750L0-9.750z" fill="#ffcd40"/><path d="M-16.890-9.750A19.500 19.500 0 0 1 16.890-9.750L0-9.750L-8.440 4.870L-16.890-9.750" fill="#db4437"/><path d="M-16.890-9.750L-8.440 4.870L0 0z" fill="#db4437"/><path d="M-16.890 9.750L-8.440 4.870L-16.890-9.750A19.500 19.500 0 0 0 -16.890 9.750z" fill="#0f9d58"/><path d="M-8.440 4.870L1 19.500 9.750 4.870z" fill="#0f9d58"/><path d="M-8.440 4.870L-16.890 9.750A19.500 19.500 0 0 0 1.500 19.440L9 5z" fill="#0f9d58"/><circle r="9" fill="#ffffff"/><circle r="7.200" fill="#4285f4"/></g><g transform="translate(854.800,1024.200)"><rect width="42.100" height="41.600" rx="1.500" fill="#ffffff"/><path d="M0 31h42.100v9.100q0 1.500-1.500 1.500h-39.100q-1.500 0-1.500-1.500z" fill="#e8804a"/><text x="6" y="23.500" font-size="21.500" font-weight="bold" font-style="italic" fill="#16702a" stroke="#16702a" stroke-width=".7" textLength="30" lengthAdjust="spacingAndGlyphs">IFC</text><circle cx="10.200" cy="3.700" r="2.300" fill="none" stroke="#2f9a3f" stroke-width="1.300"/><text x="6.200" y="30.300" font-size="7.600" font-weight="bold" font-style="italic" fill="#16702a" stroke="#16702a" stroke-width=".3" textLength="29.500" lengthAdjust="spacingAndGlyphs">Markets</text><text x="13.200" y="40" font-size="8.500" font-weight="bold" fill="#2a1a10" textLength="10.500" lengthAdjust="spacingAndGlyphs">MT</text><text x="23.600" y="40.800" font-size="11.500" font-weight="bold" fill="#fff">4</text></g><g transform="translate(938,1024.200)"><rect width="42.200" height="41.600" fill="#ffffff"/><circle cx="20.900" cy="20.700" r="16.400" fill="#1a78c8"/><path d="M3 14.200h19.500l-16.500 14.500-5-6z" fill="#ffffff"/><path d="M39 28h-20.500l17-15 5 7z" fill="#ffffff"/></g><g transform="translate(1041.600,1044.500)"><circle cx="-8" cy="-9" r="6.300" fill="#f3e9d2"/><circle cx="2.500" cy="-12.500" r="7.300" fill="#fbf4e2"/><circle cx="10" cy="-6.500" r="5.300" fill="#efe3c8"/><circle cx="-2" cy="-5" r="6.800" fill="#f7efdc"/><circle cx="6" cy="-4" r="5.500" fill="#f7efdc"/><path d="M-13.300-1h27l-3.600 19.500q-9.900 2.500-19.800 0z" fill="#e23a32"/><path d="M-9.300-1h3.600l1.200 20.600-2.600-.3zM-1.800-1h3.600l-.3 21h-3zM5.700-1h3.600l-2.800 20.400-2.400.4z" fill="#faf6f0"/><circle cx="-4.500" cy="-8" r="1.400" fill="#1a1a1a"/><circle cx="5.500" cy="-8" r="1.400" fill="#1a1a1a"/><path d="M-2-5q2.500 4 5 0z" fill="#d02a2a"/></g><g transform="translate(1108.900,1024.200)"><rect width="31.900" height="41.600" rx="1.200" fill="#ffffff"/><rect x="4.100" y="4" width="23.300" height="5.300" fill="#0b0e16"/><path d="M4.4 15.0h5.300l-5.300 4.200z" fill="#0b0e16"/><path d="M4.4 23.6h5.300l-5.300 4.200z" fill="#0b0e16"/><path d="M4.4 32.2h5.300l-5.300 4.200z" fill="#0b0e16"/><path d="M13.3 15.0h5.300l-5.300 4.200z" fill="#0b0e16"/><path d="M13.3 23.6h5.300l-5.300 4.200z" fill="#0b0e16"/><path d="M13.3 32.2h5.300l-5.300 4.200z" fill="#0b0e16"/><path d="M22.2 15.0h5.300l-5.300 4.200z" fill="#0b0e16"/><path d="M22.2 23.6h5.300l-5.300 4.200z" fill="#0b0e16"/><path d="M22.2 32.2h5.300l-5.300 4.200z" fill="#0b0e16"/></g><g transform="translate(1189.500,1027.700)"><path d="M4 3q8-3 16-1l15.500 4v30.500l-22-3.500q-7 0-11 3z" fill="#eef3fb"/><path d="M4 3q8-3 16-1l-1 2q-7-2-13 1v28l-3.500 3z" fill="#5a7fc8"/><path d="M2.500 36q4-4 11-3.500l22 3.500" fill="none" stroke="#c8d4ea" stroke-width="1.200"/><text x="12.500" y="18" font-size="12.500" font-weight="bold" font-style="italic" fill="#2f54a8">W</text><path d="M26 11.500h7M26 14.500h7M26 17.500h7M13 21.500h20M13 24.500h20M13 27.500h20" stroke="#4a6cc0" stroke-width="1.300"/></g><g transform="translate(1269.700,1027.700)"><path d="M0 11.500L21.300 0 42.300 11.500v22.500h-42.300z" fill="#ffffff"/><path d="M2.100 12l38.900-.5-16.800 7.600 11.500 9.600z" fill="#0b0e16"/></g><g transform="translate(1355,1029.500)"><path d="M0 2q0-2 2-2h11.500l3.300 3.300h19q2 0 2 2v23.700q0 2-2 2h-33.800q-2 0-2-2z" fill="#e9b94c"/><path d="M0 6.500h37.800v22.500q0 2-2 2h-33.800q-2 0-2-2z" fill="#f9d877"/><rect x="3" y="2.300" width="7.500" height="1.800" rx=".9" fill="#7fd0f0"/><path d="M6.200 31v-11q0-4.400 4.400-4.400h16.800q4.400 0 4.400 4.400v11h-6.300v-8.300h-12.600v8.300z" fill="#3a9fe0"/></g><g transform="translate(1435.600,1024.200)"><path d="M13 10v-2q0-7.500 8-7.500t8 7.500v2" fill="none" stroke="#e4e4e4" stroke-width="1.500"/><path d="M16 10v-1.500q0-5 5-5t5 5v1.500" fill="none" stroke="#e4e4e4" stroke-width="1.300"/><path d="M0 9.700h41.600v26.900q0 2-2 2h-37.600q-2 0-2-2z" fill="#ffffff"/><rect x="12.400" y="16.800" width="7.300" height="7.100" fill="#f25022"/><rect x="21.600" y="16.800" width="7.600" height="7.100" fill="#7fba00"/><rect x="12.400" y="25.600" width="7.300" height="7.200" fill="#00a4ef"/><rect x="21.600" y="25.600" width="7.600" height="7.200" fill="#ffb900"/></g><g transform="translate(1539.400,1045)"><path d="M-17.300 1.500q.8-19.500 18.300-19.500 16.300 0 16.300 20.500h-23.800q1 7.500 10.500 7.500 6.500 0 11-2.800v8.300q-5.500 3-13 3-15.500 0-15.500-15.500 0-8.500 7.800-13-4.300 4-5.300 11.500z" fill="#1a82e0"/><path d="M-6.500-3.500h13.500q0-7-6.500-7-6 0-7 7z" fill="#0b0e16"/></g><g transform="translate(1601.700,1023.800)"><rect width="42.300" height="42" fill="#ffffff"/><circle cx="21.300" cy="20.100" r="17.800" fill="#2468c8"/><path d="M7 30l-2.800 7 8.500-2.500z" fill="#2468c8"/><text x="21.500" y="25.700" font-size="16" font-weight="bold" fill="#fff" text-anchor="middle" textLength="26.500" lengthAdjust="spacingAndGlyphs">imo</text></g><path d="M1697.300 1030.800v27.300" stroke="#fff" stroke-width="1.500" fill="none"/><rect x="1695.700" y="1038.400" width="3.200" height="4" fill="#fff"/><rect x="1705.200" y="1035.800" width="20.100" height="16.900" fill="none" stroke="#fff" stroke-width="1.500"/><path d="M1705.200 1035.800v-5M1725.300 1035.800v-5M1705.200 1058.100v-3.700h20.100v3.700" fill="none" stroke="#fff" stroke-width="1.500"/><circle cx="1798.600" cy="1040.600" r="10" fill="none" stroke="#fff" stroke-width="1.500"/><path d="M1791.500 1047.800l-12 11.500" stroke="#fff" stroke-width="1.600"/><path d="M1865.800 1035.400l10.200-1.500v10h-10.200zM1877.500 1033.700l13-1.900v12.100h-13zM1865.800 1045.400h10.200v10l-10.200-1.500zM1877.500 1045.400h13v12.100l-13-1.900z" fill="#ffffff"/>
</svg></body></html>
